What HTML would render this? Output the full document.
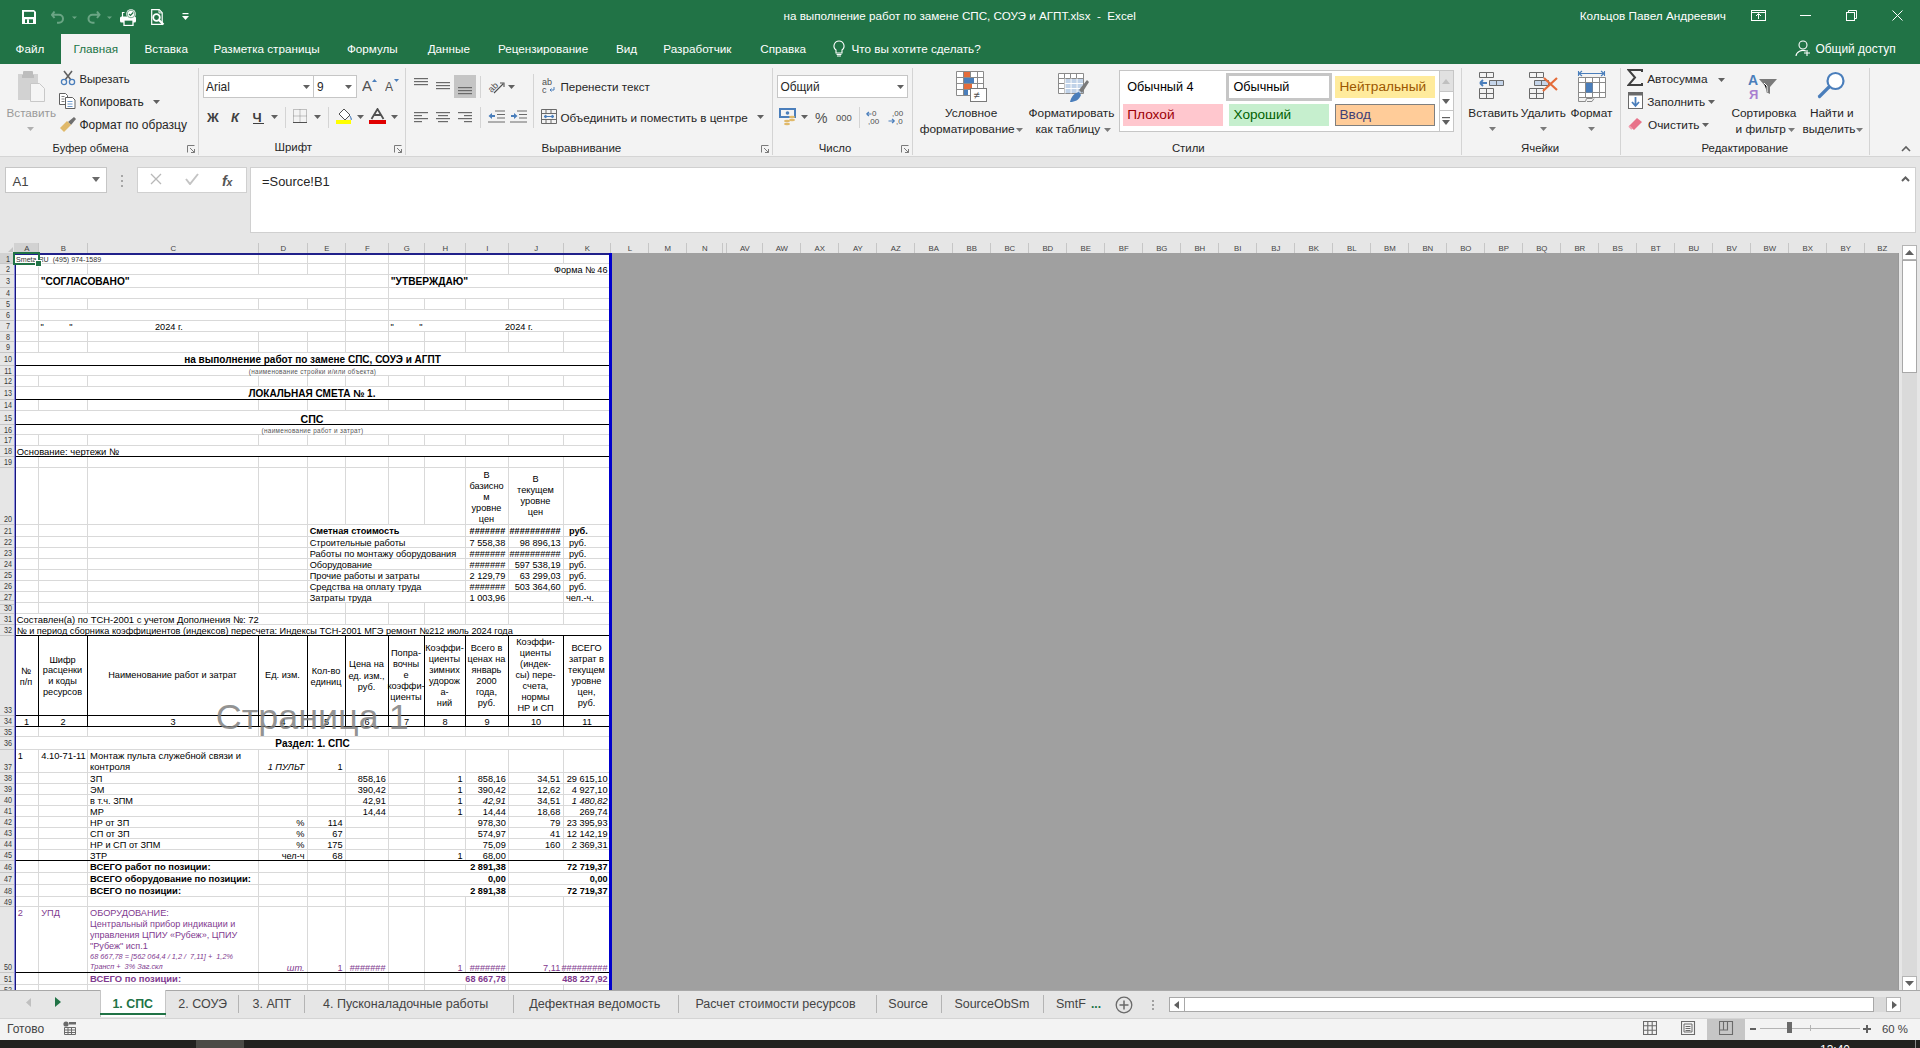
<!DOCTYPE html><html><head><meta charset="utf-8"><title>Excel</title><style>
*{margin:0;padding:0}
html,body{width:1920px;height:1048px;overflow:hidden;background:#e6e6e6}
body{position:relative;font-family:"Liberation Sans",sans-serif}
.t{position:absolute;line-height:0;white-space:pre}
.tc{transform:translateX(-50%)}
.r{position:absolute;display:block}
</style></head><body><div class="r" style="left:0px;top:0px;width:1920px;height:64px;background:#217346;"></div>
<div class="r" style="left:61px;top:34px;width:69px;height:30px;background:#f3f3f3;"></div>
<div class="r" style="left:0px;top:64px;width:1920px;height:92px;background:#f3f3f3;"></div>
<div class="r" style="left:0px;top:156px;width:1920px;height:1px;background:#d5d5d5;"></div>
<div class="r" style="left:0px;top:157px;width:1920px;height:86px;background:#e6e6e6;"></div>
<div class="t" style="left:783.50px;top:16.36px;font-size:11.65px;color:#ffffff;font-weight:normal;font-style:normal;">на выполнение работ по замене СПС, СОУЭ и АГПТ.xlsx  -  Excel</div>
<div class="t" style="left:1579.70px;top:16.21px;font-size:11.79px;color:#ffffff;font-weight:normal;font-style:normal;">Кольцов Павел Андреевич</div>
<svg class="r" style="left:1751px;top:10px;" width="15" height="11" viewBox="0 0 15 11"><rect x="0.5" y="0.5" width="14" height="10" fill="none" stroke="#fff"/><line x1="0" y1="2.5" x2="15" y2="2.5" stroke="#fff"/><path d="M7.5 9V4M5 6l2.5-2.5L10 6" fill="none" stroke="#fff"/></svg>
<div class="r" style="left:1800px;top:15px;width:11px;height:1px;background:#ffffff;"></div>
<svg class="r" style="left:1846px;top:10px;" width="11" height="11" viewBox="0 0 11 11"><rect x="0.5" y="2.5" width="8" height="8" fill="none" stroke="#fff"/><path d="M2.5 2.5V0.5h8v8h-2" fill="none" stroke="#fff"/></svg>
<svg class="r" style="left:1892px;top:10px;" width="11" height="11" viewBox="0 0 11 11"><path d="M0.5 0.5l10 10M10.5 0.5l-10 10" stroke="#fff"/></svg>
<svg class="r" style="left:22px;top:10px;" width="14" height="14" viewBox="0 0 14 14"><path d="M0 0h12l2 2v12H0z" fill="#fff"/><rect x="2" y="1.8" width="10" height="5.2" fill="#217346"/><rect x="3" y="9.3" width="8" height="3.7" fill="#217346"/><rect x="5" y="9.3" width="2" height="3.7" fill="#fff"/></svg>
<svg class="r" style="left:51px;top:10px;" width="30" height="14" viewBox="0 0 30 14"><path d="M3.5 1.5L1 4.8 3.5 8M1.5 4.8h6.5a4 4 0 0 1 0 8H6" fill="none" stroke="#6aa584" stroke-width="2"/><path d="M21 6.5h5l-2.5 2.5z" fill="#6aa584"/></svg>
<svg class="r" style="left:86px;top:10px;" width="30" height="14" viewBox="0 0 30 14"><path d="M11 1.5l2.5 3.3L11 8M13 4.8H6.5a4 4 0 0 0 0 8H8.5" fill="none" stroke="#6aa584" stroke-width="2"/><path d="M21 6.5h5l-2.5 2.5z" fill="#6aa584"/></svg>
<svg class="r" style="left:120px;top:9px;" width="17" height="17" viewBox="0 0 17 17"><path d="M2.5 8V3.5h2" fill="none" stroke="#fff" stroke-width="1.2"/><rect x="0" y="7.5" width="16" height="6" rx="1.5" fill="#fff"/><rect x="4" y="11" width="9" height="5.5" fill="#217346" stroke="#fff" stroke-width="1.3"/><circle cx="11" cy="5" r="4.8" fill="#fff"/><circle cx="11" cy="5" r="3.8" fill="none" stroke="#217346" stroke-width="0.6"/><path d="M9 5l1.5 1.5L13.2 3.5" fill="none" stroke="#217346" stroke-width="1.2"/></svg>
<svg class="r" style="left:151px;top:9px;" width="17" height="17" viewBox="0 0 17 17"><path d="M0.7 0.7h7.5l3 3V15.3H0.7z" fill="none" stroke="#fff" stroke-width="1.2"/><path d="M8 0.7v3.2h3" fill="none" stroke="#fff" stroke-width="1"/><circle cx="5.5" cy="8.5" r="3.3" fill="#217346" stroke="#fff" stroke-width="1.8"/><path d="M8 11l4.5 4.5" stroke="#fff" stroke-width="2.2"/></svg>
<svg class="r" style="left:182px;top:13px;" width="7" height="8" viewBox="0 0 7 8"><rect x="0.5" y="0" width="6" height="1.2" fill="#fff"/><path d="M0 3h7L3.5 7z" fill="#fff"/></svg>
<div class="t" style="left:15.50px;top:49.05px;font-size:11.7px;color:#ffffff;font-weight:normal;font-style:normal;">Файл</div>
<div class="t" style="left:144.50px;top:49.05px;font-size:11.7px;color:#ffffff;font-weight:normal;font-style:normal;">Вставка</div>
<div class="t" style="left:213.50px;top:49.05px;font-size:11.7px;color:#ffffff;font-weight:normal;font-style:normal;">Разметка страницы</div>
<div class="t" style="left:346.90px;top:49.05px;font-size:11.7px;color:#ffffff;font-weight:normal;font-style:normal;">Формулы</div>
<div class="t" style="left:427.70px;top:49.05px;font-size:11.7px;color:#ffffff;font-weight:normal;font-style:normal;">Данные</div>
<div class="t" style="left:497.90px;top:49.05px;font-size:11.7px;color:#ffffff;font-weight:normal;font-style:normal;">Рецензирование</div>
<div class="t" style="left:616.00px;top:49.05px;font-size:11.7px;color:#ffffff;font-weight:normal;font-style:normal;">Вид</div>
<div class="t" style="left:663.30px;top:49.05px;font-size:11.7px;color:#ffffff;font-weight:normal;font-style:normal;">Разработчик</div>
<div class="t" style="left:760.20px;top:49.05px;font-size:11.7px;color:#ffffff;font-weight:normal;font-style:normal;">Справка</div>
<div class="t" style="left:851.50px;top:49.05px;font-size:11.7px;color:#ffffff;font-weight:normal;font-style:normal;">Что вы хотите сделать?</div>
<div class="t" style="left:73.50px;top:49.05px;font-size:11.7px;color:#217346;font-weight:normal;font-style:normal;">Главная</div>
<svg class="r" style="left:832px;top:40px;" width="14" height="17" viewBox="0 0 14 17"><path d="M7 1a5 5 0 0 0-3 9v3h6v-3a5 5 0 0 0-3-9z" fill="none" stroke="#fff" stroke-width="1.1"/><path d="M4.5 14.5h5M5 16h4" stroke="#fff"/></svg>
<svg class="r" style="left:1795px;top:40px;" width="16" height="17" viewBox="0 0 16 17"><circle cx="8" cy="5" r="4" fill="none" stroke="#fff" stroke-width="1.1"/><path d="M1 16a7 6 0 0 1 10-5" fill="none" stroke="#fff" stroke-width="1.1"/><path d="M12 10v6M9 13h6" stroke="#fff" stroke-width="1.1"/></svg>
<div class="t" style="left:1815.50px;top:48.96px;font-size:11.95px;color:#ffffff;font-weight:normal;font-style:normal;">Общий доступ</div>
<svg class="r" style="left:17px;top:71px;" width="30" height="32" viewBox="0 0 30 32"><rect x="1" y="3" width="20" height="26" fill="#d2d2d2"/><rect x="6" y="0" width="10" height="6" rx="1" fill="#bdbdbd"/><rect x="5" y="4" width="12" height="3" fill="#bdbdbd"/><path d="M13.5 12.5h9l5 5v13h-14z" fill="#f5f5f5" stroke="#c8c8c8"/></svg>
<div class="t" style="left:6.50px;top:113.25px;font-size:11.7px;color:#9a9a9a;font-weight:normal;font-style:normal;">Вставить</div>
<svg class="r" style="left:27px;top:127px;" width="7" height="4" viewBox="0 0 7 4"><path d="M0 0h7L3.5 4z" fill="#b0b0b0"/></svg>
<svg class="r" style="left:60px;top:70px;" width="16" height="16" viewBox="0 0 16 16"><path d="M4 1l7 9M12 1l-7 9" stroke="#606060" stroke-width="1.6"/><circle cx="4" cy="12" r="2.6" fill="none" stroke="#4a7ebb" stroke-width="1.3"/><circle cx="12" cy="12" r="2.6" fill="none" stroke="#4a7ebb" stroke-width="1.3"/></svg>
<div class="t" style="left:79.40px;top:79.48px;font-size:11.3px;color:#262626;font-weight:normal;font-style:normal;">Вырезать</div>
<svg class="r" style="left:59px;top:93px;" width="17" height="16" viewBox="0 0 17 16"><path d="M0.5 0.5h6l2 2v9h-8z" fill="#fff" stroke="#606060"/><path d="M6.5 4.5h7l2.5 2.5v8.5h-9.5z" fill="#fff" stroke="#606060"/><path d="M8.5 8.5h5M8.5 11h5M8.5 13.5h5" stroke="#4a7ebb" stroke-width="0.8"/><path d="M2.5 3.5h3M2.5 6h3M2.5 8.5h3" stroke="#606060" stroke-width="0.8"/></svg>
<div class="t" style="left:79.40px;top:102.21px;font-size:11.94px;color:#262626;font-weight:normal;font-style:normal;">Копировать</div>
<svg class="r" style="left:153px;top:100px;" width="7" height="4" viewBox="0 0 7 4"><path d="M0 0h7L3.5 4z" fill="#606060"/></svg>
<svg class="r" style="left:59px;top:116px;" width="18" height="16" viewBox="0 0 18 16"><path d="M9 6l6-5 2 2-5 6z" fill="#6f6f6f"/><path d="M1 12l7-7 4 4-7 7z" fill="#e0b96a"/></svg>
<div class="t" style="left:79.40px;top:124.64px;font-size:12.0px;color:#262626;font-weight:normal;font-style:normal;">Формат по образцу</div>
<div class="t" style="left:52.60px;top:147.53px;font-size:11.18px;color:#262626;font-weight:normal;font-style:normal;">Буфер обмена</div>
<svg class="r" style="left:187px;top:145px;" width="8" height="8" viewBox="0 0 8 8"><path d="M0.5 7.5V0.5H7.5" fill="none" stroke="#7a7a7a"/><path d="M3 3l4.5 4.5M7.5 4v3.5H4" fill="none" stroke="#7a7a7a"/></svg>
<div class="r" style="left:198px;top:68px;width:1px;height:87px;background:#d4d4d4;"></div>
<div class="r" style="left:203px;top:75px;width:111px;height:23px;background:#ffffff;box-sizing:border-box;border:1px solid #c6c6c6;"></div>
<div class="r" style="left:313px;top:75px;width:44px;height:23px;background:#ffffff;box-sizing:border-box;border:1px solid #c6c6c6;"></div>
<div class="t" style="left:206.00px;top:87.28px;font-size:11.9px;color:#262626;font-weight:normal;font-style:normal;">Arial</div>
<div class="t" style="left:317.00px;top:87.28px;font-size:11.9px;color:#262626;font-weight:normal;font-style:normal;">9</div>
<svg class="r" style="left:303px;top:85px;" width="7" height="4" viewBox="0 0 7 4"><path d="M0 0h7L3.5 4z" fill="#606060"/></svg>
<svg class="r" style="left:345px;top:85px;" width="7" height="4" viewBox="0 0 7 4"><path d="M0 0h7L3.5 4z" fill="#606060"/></svg>
<svg class="r" style="left:362px;top:78px;" width="15" height="13" viewBox="0 0 15 13"><text x="0" y="13" font-family="Liberation Sans" font-size="15" fill="#505050">A</text><path d="M10 4h5l-2.5-3z" fill="#4a7ebb"/></svg>
<svg class="r" style="left:385px;top:78px;" width="14" height="13" viewBox="0 0 14 13"><text x="0" y="13" font-family="Liberation Sans" font-size="12" fill="#505050">A</text><path d="M9 1h5l-2.5 3z" fill="#4a7ebb"/></svg>
<div class="t" style="left:207.00px;top:117.90px;font-size:13px;color:#404040;font-weight:bold;font-style:normal;">Ж</div>
<div class="t" style="left:231.00px;top:117.90px;font-size:13px;color:#404040;font-weight:bold;font-style:italic;">К</div>
<div class="t" style="left:252.50px;top:117.90px;font-size:13px;color:#404040;font-weight:bold;font-style:normal;">Ч</div>
<div class="r" style="left:253px;top:123px;width:11px;height:1px;background:#404040;"></div>
<svg class="r" style="left:271px;top:115px;" width="7" height="4" viewBox="0 0 7 4"><path d="M0 0h7L3.5 4z" fill="#606060"/></svg>
<div class="r" style="left:285px;top:107px;width:1px;height:21px;background:#d4d4d4;"></div>
<svg class="r" style="left:293px;top:109px;" width="14" height="14" viewBox="0 0 14 14"><path d="M0.5 0.5h13v13h-13zM7 0.5v13M0.5 7h13" fill="none" stroke="#8a8a8a" stroke-dasharray="1 1"/><path d="M0 13.5h14" stroke="#505050"/></svg>
<svg class="r" style="left:314px;top:115px;" width="7" height="4" viewBox="0 0 7 4"><path d="M0 0h7L3.5 4z" fill="#606060"/></svg>
<div class="r" style="left:328px;top:107px;width:1px;height:21px;background:#d4d4d4;"></div>
<svg class="r" style="left:335px;top:108px;" width="18" height="17" viewBox="0 0 18 17"><path d="M4 6l5-5 6 6-5 5z" fill="#fff" stroke="#505050"/><path d="M15 8c1 2 2 3 1 4" fill="#4a7ebb" stroke="#4a7ebb"/><rect x="1" y="12" width="15" height="4" fill="#ffff00"/></svg>
<svg class="r" style="left:357px;top:115px;" width="7" height="4" viewBox="0 0 7 4"><path d="M0 0h7L3.5 4z" fill="#606060"/></svg>
<svg class="r" style="left:369px;top:108px;" width="17" height="17" viewBox="0 0 17 17"><path d="M2.5 11L8.5 1l6 10M5 7h7" fill="none" stroke="#505050" stroke-width="1.8"/><rect x="0" y="12" width="17" height="4" fill="#e00000"/></svg>
<svg class="r" style="left:391px;top:115px;" width="7" height="4" viewBox="0 0 7 4"><path d="M0 0h7L3.5 4z" fill="#606060"/></svg>
<div class="t" style="left:274.60px;top:147.45px;font-size:11.4px;color:#262626;font-weight:normal;font-style:normal;">Шрифт</div>
<svg class="r" style="left:394px;top:145px;" width="8" height="8" viewBox="0 0 8 8"><path d="M0.5 7.5V0.5H7.5" fill="none" stroke="#7a7a7a"/><path d="M3 3l4.5 4.5M7.5 4v3.5H4" fill="none" stroke="#7a7a7a"/></svg>
<div class="r" style="left:405px;top:68px;width:1px;height:87px;background:#d4d4d4;"></div>
<svg class="r" style="left:414px;top:78px;" width="14" height="9" viewBox="0 0 14 9"><rect x="0" y="0" width="14" height="1.2" fill="#6a6a6a"/><rect x="0" y="3" width="14" height="1.2" fill="#6a6a6a"/><rect x="0" y="6" width="14" height="1.2" fill="#6a6a6a"/></svg>
<svg class="r" style="left:436px;top:82px;" width="14" height="9" viewBox="0 0 14 9"><rect x="0" y="0" width="14" height="1.2" fill="#6a6a6a"/><rect x="0" y="3" width="14" height="1.2" fill="#6a6a6a"/><rect x="0" y="6" width="14" height="1.2" fill="#6a6a6a"/></svg>
<div class="r" style="left:454px;top:75px;width:22px;height:23px;background:#c5c5c5;"></div>
<svg class="r" style="left:458px;top:87px;" width="14" height="9" viewBox="0 0 14 9"><rect x="0" y="0" width="14" height="1.2" fill="#6a6a6a"/><rect x="0" y="3" width="14" height="1.2" fill="#6a6a6a"/><rect x="0" y="6" width="14" height="1.2" fill="#6a6a6a"/></svg>
<div class="r" style="left:480px;top:76px;width:1px;height:22px;background:#d4d4d4;"></div>
<svg class="r" style="left:487px;top:78px;" width="20" height="16" viewBox="0 0 20 16"><text x="0" y="12" font-family="Liberation Sans" font-size="9" fill="#505050" transform="rotate(-45 6 8)">ab</text><path d="M7 15l9-9M13 5h4v4" fill="none" stroke="#505050" stroke-width="1.1"/></svg>
<svg class="r" style="left:508px;top:85px;" width="7" height="4" viewBox="0 0 7 4"><path d="M0 0h7L3.5 4z" fill="#606060"/></svg>
<svg class="r" style="left:414px;top:112px;" width="14" height="12" viewBox="0 0 14 12"><rect x="0" y="0" width="14" height="1.2" fill="#6a6a6a"/><rect x="0" y="3" width="8" height="1.2" fill="#6a6a6a"/><rect x="0" y="6" width="14" height="1.2" fill="#6a6a6a"/><rect x="0" y="9" width="8" height="1.2" fill="#6a6a6a"/></svg>
<svg class="r" style="left:436px;top:112px;" width="14" height="12" viewBox="0 0 14 12"><rect x="0.0" y="0" width="14" height="1.2" fill="#6a6a6a"/><rect x="2.0" y="3" width="10" height="1.2" fill="#6a6a6a"/><rect x="0.0" y="6" width="14" height="1.2" fill="#6a6a6a"/><rect x="2.0" y="9" width="10" height="1.2" fill="#6a6a6a"/></svg>
<svg class="r" style="left:458px;top:112px;" width="14" height="12" viewBox="0 0 14 12"><rect x="0" y="0" width="14" height="1.2" fill="#6a6a6a"/><rect x="6" y="3" width="8" height="1.2" fill="#6a6a6a"/><rect x="0" y="6" width="14" height="1.2" fill="#6a6a6a"/><rect x="6" y="9" width="8" height="1.2" fill="#6a6a6a"/></svg>
<div class="r" style="left:480px;top:107px;width:1px;height:21px;background:#d4d4d4;"></div>
<svg class="r" style="left:488px;top:110px;" width="17" height="14" viewBox="0 0 17 14"><path d="M7 1h10M9 4.5h8M9 8h8M0 12h17" stroke="#6a6a6a" stroke-width="1.2"/><path d="M0.5 6l3.5-3v2h3v2h-3v2z" fill="#4a7ebb"/></svg>
<svg class="r" style="left:510px;top:110px;" width="17" height="14" viewBox="0 0 17 14"><path d="M7 1h10M9 4.5h8M9 8h8M0 12h17" stroke="#6a6a6a" stroke-width="1.2"/><path d="M7.5 6l-3.5-3v2h-3v2h3v2z" fill="#4a7ebb"/></svg>
<div class="r" style="left:533px;top:74px;width:1px;height:54px;background:#d4d4d4;"></div>
<svg class="r" style="left:542px;top:77px;" width="14" height="17" viewBox="0 0 14 17"><text x="0" y="8" font-family="Liberation Sans" font-size="9" fill="#505050">ab</text><text x="0" y="16" font-family="Liberation Sans" font-size="9" fill="#505050">c</text><path d="M12 10v3h-4M9.5 11.5l-1.5 1.5 1.5 1.5" fill="none" stroke="#4a7ebb"/></svg>
<div class="t" style="left:560.40px;top:87.38px;font-size:11.61px;color:#262626;font-weight:normal;font-style:normal;">Перенести текст</div>
<svg class="r" style="left:541px;top:109px;" width="16" height="15" viewBox="0 0 16 15"><path d="M0.5 0.5h15v14h-15zM0.5 4.5h15M0.5 10.5h15M5 0.5v4M10 0.5v4M5 10.5v4M10 10.5v4" fill="none" stroke="#6a6a6a"/><path d="M3 7.5h10M3 7.5l2-1.5v3zM13 7.5l-2-1.5v3z" fill="#4a7ebb" stroke="#4a7ebb"/></svg>
<div class="t" style="left:560.40px;top:118.34px;font-size:11.72px;color:#262626;font-weight:normal;font-style:normal;">Объединить и поместить в центре</div>
<svg class="r" style="left:757px;top:115px;" width="7" height="4" viewBox="0 0 7 4"><path d="M0 0h7L3.5 4z" fill="#606060"/></svg>
<div class="t" style="left:541.50px;top:147.58px;font-size:11.6px;color:#262626;font-weight:normal;font-style:normal;">Выравнивание</div>
<svg class="r" style="left:761px;top:145px;" width="8" height="8" viewBox="0 0 8 8"><path d="M0.5 7.5V0.5H7.5" fill="none" stroke="#7a7a7a"/><path d="M3 3l4.5 4.5M7.5 4v3.5H4" fill="none" stroke="#7a7a7a"/></svg>
<div class="r" style="left:772px;top:68px;width:1px;height:87px;background:#d4d4d4;"></div>
<div class="r" style="left:777px;top:75px;width:131px;height:23px;background:#ffffff;box-sizing:border-box;border:1px solid #c6c6c6;"></div>
<div class="t" style="left:780.50px;top:87.28px;font-size:11.9px;color:#262626;font-weight:normal;font-style:normal;">Общий</div>
<svg class="r" style="left:897px;top:85px;" width="7" height="4" viewBox="0 0 7 4"><path d="M0 0h7L3.5 4z" fill="#606060"/></svg>
<svg class="r" style="left:779px;top:108px;" width="18" height="18" viewBox="0 0 18 18"><rect x="1" y="1" width="15" height="8" fill="none" stroke="#4a7ebb" stroke-width="2"/><circle cx="8.5" cy="5" r="1.8" fill="#4a7ebb"/><ellipse cx="13" cy="9" rx="3" ry="1.3" fill="#e0b96a"/><ellipse cx="13" cy="12" rx="3" ry="1.3" fill="#e0b96a"/><ellipse cx="8" cy="13" rx="3" ry="1.3" fill="#e0b96a"/><ellipse cx="8" cy="16" rx="3" ry="1.3" fill="#e0b96a"/></svg>
<svg class="r" style="left:801px;top:115px;" width="7" height="4" viewBox="0 0 7 4"><path d="M0 0h7L3.5 4z" fill="#606060"/></svg>
<div class="t" style="left:815.00px;top:118.25px;font-size:14px;color:#505050;font-weight:normal;font-style:normal;">%</div>
<div class="t" style="left:836.00px;top:118.31px;font-size:9.5px;color:#505050;font-weight:normal;font-style:normal;">000</div>
<div class="r" style="left:859px;top:107px;width:1px;height:21px;background:#d4d4d4;"></div>
<svg class="r" style="left:866px;top:109px;" width="16" height="16" viewBox="0 0 16 16"><text x="6" y="7" font-family="Liberation Sans" font-size="8" fill="#505050">0</text><text x="2" y="15" font-family="Liberation Sans" font-size="8" fill="#505050">,00</text><path d="M0.5 5h5M0.5 5l2.5-2M0.5 5l2.5 2" fill="none" stroke="#4a7ebb" stroke-width="1.2"/></svg>
<svg class="r" style="left:888px;top:109px;" width="16" height="16" viewBox="0 0 16 16"><text x="4" y="7" font-family="Liberation Sans" font-size="8" fill="#505050">,00</text><text x="8" y="15" font-family="Liberation Sans" font-size="8" fill="#505050">,0</text><path d="M0.5 12h6M6.5 12l-2.5-2M6.5 12l-2.5 2" fill="none" stroke="#4a7ebb" stroke-width="1.2"/></svg>
<div class="t" style="left:818.70px;top:147.65px;font-size:11.4px;color:#262626;font-weight:normal;font-style:normal;">Число</div>
<svg class="r" style="left:901px;top:145px;" width="8" height="8" viewBox="0 0 8 8"><path d="M0.5 7.5V0.5H7.5" fill="none" stroke="#7a7a7a"/><path d="M3 3l4.5 4.5M7.5 4v3.5H4" fill="none" stroke="#7a7a7a"/></svg>
<div class="r" style="left:912px;top:68px;width:1px;height:87px;background:#d4d4d4;"></div>
<svg class="r" style="left:956px;top:71px;" width="32" height="31" viewBox="0 0 32 31"><path d="M0.5 0.5h27v24h-27zM0.5 6.5h27M0.5 12.5h27M0.5 18.5h27M7.5 0.5v24M14.5 0.5v24M21.5 0.5v24" fill="#fff" stroke="#8a8a8a"/><rect x="8" y="1" width="6" height="5" fill="#e46c3a"/><rect x="8" y="7" width="10" height="5" fill="#4a7ebb"/><rect x="8" y="13" width="8" height="5" fill="#e46c3a"/><rect x="8" y="19" width="4" height="5" fill="#4a7ebb"/><rect x="14.5" y="17.5" width="16" height="13" fill="#fff" stroke="#7a7a7a"/><text x="17.5" y="28" font-family="Liberation Sans" font-size="11" fill="#505050">≠</text></svg>
<div class="t" style="left:945.00px;top:112.90px;font-size:11.84px;color:#262626;font-weight:normal;font-style:normal;">Условное</div>
<div class="t" style="left:919.70px;top:128.50px;font-size:11.84px;color:#262626;font-weight:normal;font-style:normal;">форматирование</div>
<svg class="r" style="left:1016px;top:128px;" width="7" height="4" viewBox="0 0 7 4"><path d="M0 0h7L3.5 4z" fill="#7a7a7a"/></svg>
<svg class="r" style="left:1058px;top:73px;" width="32" height="30" viewBox="0 0 32 30"><path d="M0.5 0.5h25v20h-25zM0.5 5.5h25M0.5 10.5h25M0.5 15.5h25M6.5 0.5v20M12.5 0.5v20M18.5 0.5v20" fill="#fff" stroke="#8a8a8a"/><rect x="7" y="6" width="18" height="14" fill="#b9cde5" opacity="0.9"/><path d="M7 5.5v15M13 5.5v15M19 5.5v15M7 10.5h18M7 15.5h18" stroke="#fff"/><path d="M21 17l8-10 2 2-7 11z" fill="#7a7a7a"/><path d="M12 29c1-5 4-9 9-10l2 3c-2 5-6 7-11 7z" fill="#4a7ebb"/></svg>
<div class="t" style="left:1028.60px;top:112.90px;font-size:11.84px;color:#262626;font-weight:normal;font-style:normal;">Форматировать</div>
<div class="t" style="left:1035.40px;top:128.50px;font-size:11.84px;color:#262626;font-weight:normal;font-style:normal;">как таблицу</div>
<svg class="r" style="left:1104px;top:128px;" width="7" height="4" viewBox="0 0 7 4"><path d="M0 0h7L3.5 4z" fill="#7a7a7a"/></svg>
<div class="r" style="left:1119px;top:70px;width:335px;height:62px;background:#ffffff;box-sizing:border-box;border:1px solid #c6c6c6;"></div>
<div class="t" style="left:1127.20px;top:87.22px;font-size:12.64px;color:#000000;font-weight:normal;font-style:normal;">Обычный 4</div>
<div class="r" style="left:1226px;top:73px;width:106px;height:28px;background:#ffffff;box-sizing:border-box;border:3px solid #c6c6c6;"></div>
<div class="t" style="left:1233.50px;top:87.22px;font-size:12.64px;color:#000000;font-weight:normal;font-style:normal;">Обычный</div>
<div class="r" style="left:1335px;top:76px;width:100px;height:22px;background:#ffeb9c;"></div>
<div class="t" style="left:1339.50px;top:86.87px;font-size:13.66px;color:#9c5700;font-weight:normal;font-style:normal;">Нейтральный</div>
<div class="r" style="left:1123px;top:104px;width:100px;height:22px;background:#ffc7ce;"></div>
<div class="t" style="left:1127.20px;top:114.65px;font-size:13.7px;color:#9c0006;font-weight:normal;font-style:normal;">Плохой</div>
<div class="r" style="left:1229px;top:104px;width:100px;height:22px;background:#c6efce;"></div>
<div class="t" style="left:1233.50px;top:114.69px;font-size:13.6px;color:#006100;font-weight:normal;font-style:normal;">Хороший</div>
<div class="r" style="left:1335px;top:104px;width:100px;height:22px;background:#ffcc99;box-sizing:border-box;border:1px solid #7f7f7f;"></div>
<div class="t" style="left:1339.50px;top:114.69px;font-size:13.6px;color:#3f3f76;font-weight:normal;font-style:normal;">Ввод</div>
<div class="r" style="left:1439px;top:70px;width:15px;height:62px;background:#ffffff;box-sizing:border-box;border:1px solid #c6c6c6;"></div>
<div class="r" style="left:1440px;top:71px;width:13px;height:20px;background:#e1e1e1;"></div>
<div class="r" style="left:1439px;top:91px;width:15px;height:1px;background:#c6c6c6;"></div>
<div class="r" style="left:1439px;top:110px;width:15px;height:1px;background:#c6c6c6;"></div>
<svg class="r" style="left:1442px;top:79px;" width="9" height="5" viewBox="0 0 9 5"><path d="M0 5h8L4 0z" fill="#c0c0c0"/></svg>
<svg class="r" style="left:1442px;top:99px;" width="9" height="5" viewBox="0 0 9 5"><path d="M0 0h8L4 5z" fill="#606060"/></svg>
<svg class="r" style="left:1442px;top:117px;" width="9" height="8" viewBox="0 0 9 8"><rect x="0" y="0" width="8" height="1.2" fill="#606060"/><path d="M0 3h8L4 8z" fill="#606060"/></svg>
<div class="t" style="left:1171.90px;top:147.65px;font-size:11.4px;color:#262626;font-weight:normal;font-style:normal;">Стили</div>
<div class="r" style="left:1461px;top:68px;width:1px;height:87px;background:#d4d4d4;"></div>
<svg class="r" style="left:1478px;top:71px;" width="28" height="29" viewBox="0 0 28 29"><path d="M1.5 1.5h14v5h-14zM8.5 1.5v5" fill="none" stroke="#6a6a6a"/><path d="M11.5 9.5h14v5h-14zM18.5 9.5v5" fill="#c5d5ea" stroke="#6a6a6a"/><path d="M1.5 17.5h14v10h-14zM1.5 22.5h14M8.5 17.5v10" fill="none" stroke="#6a6a6a"/><path d="M2 12h7M2 12l3-3M2 12l3 3" fill="none" stroke="#4a7ebb" stroke-width="1.8"/></svg>
<div class="t" style="left:1468.30px;top:112.90px;font-size:11.84px;color:#262626;font-weight:normal;font-style:normal;">Вставить</div>
<svg class="r" style="left:1489px;top:127px;" width="7" height="4" viewBox="0 0 7 4"><path d="M0 0h7L3.5 4z" fill="#7a7a7a"/></svg>
<svg class="r" style="left:1528px;top:71px;" width="32" height="29" viewBox="0 0 32 29"><path d="M1.5 1.5h14v5h-14zM8.5 1.5v5" fill="none" stroke="#6a6a6a"/><path d="M6.5 9.5h14v5h-14zM13.5 9.5v5" fill="#c5d5ea" stroke="#6a6a6a"/><path d="M1.5 17.5h14v10h-14zM1.5 22.5h14M8.5 17.5v10" fill="none" stroke="#6a6a6a"/><path d="M15 20l14-13M16 7l13 12" stroke="#e46c3a" stroke-width="2.2"/></svg>
<div class="t" style="left:1520.80px;top:112.90px;font-size:11.84px;color:#262626;font-weight:normal;font-style:normal;">Удалить</div>
<svg class="r" style="left:1540px;top:127px;" width="7" height="4" viewBox="0 0 7 4"><path d="M0 0h7L3.5 4z" fill="#7a7a7a"/></svg>
<svg class="r" style="left:1577px;top:70px;" width="30" height="32" viewBox="0 0 30 32"><path d="M1.5 1v5M27.5 1v5M2 3.5h25M2 3.5l3-2.5M2 3.5l3 2.5M27 3.5l-3-2.5M27 3.5l-3 2.5" fill="none" stroke="#4a7ebb" stroke-width="1.1"/><path d="M1.5 7.5h27v20h-27zM1.5 12.5h27M1.5 22.5h27M8.5 7.5v20M15.5 7.5v20M22.5 7.5v20" fill="#fff" stroke="#8a8a8a"/><rect x="9" y="13" width="6.5" height="9.5" fill="#4a7ebb"/><path d="M1.5 27.5v4h7l1-3h6" fill="none" stroke="#8a8a8a"/><path d="M10 31.5h5l2-3" fill="none" stroke="#8a8a8a"/></svg>
<div class="t" style="left:1570.40px;top:112.90px;font-size:11.84px;color:#262626;font-weight:normal;font-style:normal;">Формат</div>
<svg class="r" style="left:1588px;top:127px;" width="7" height="4" viewBox="0 0 7 4"><path d="M0 0h7L3.5 4z" fill="#7a7a7a"/></svg>
<div class="t" style="left:1521.00px;top:147.65px;font-size:11.4px;color:#262626;font-weight:normal;font-style:normal;">Ячейки</div>
<div class="r" style="left:1620px;top:68px;width:1px;height:87px;background:#d4d4d4;"></div>
<svg class="r" style="left:1627px;top:69px;" width="17" height="17" viewBox="0 0 17 17"><path d="M15 3V1H1.5l6.5 7.5L1.5 16H15v-2" fill="none" stroke="#404040" stroke-width="2"/></svg>
<div class="t" style="left:1647.20px;top:79.30px;font-size:11.84px;color:#262626;font-weight:normal;font-style:normal;">Автосумма</div>
<svg class="r" style="left:1718px;top:78px;" width="7" height="4" viewBox="0 0 7 4"><path d="M0 0h7L3.5 4z" fill="#606060"/></svg>
<svg class="r" style="left:1628px;top:92px;" width="16" height="18" viewBox="0 0 16 18"><rect x="0.5" y="0.5" width="14" height="16" fill="#fff" stroke="#6a6a6a"/><rect x="0.5" y="0.5" width="14" height="3" fill="#6a6a6a"/><path d="M7.5 5v9M4 10l3.5 4 3.5-4" fill="none" stroke="#4a7ebb" stroke-width="1.8"/></svg>
<div class="t" style="left:1647.20px;top:102.30px;font-size:11.84px;color:#262626;font-weight:normal;font-style:normal;">Заполнить</div>
<svg class="r" style="left:1708px;top:100px;" width="7" height="4" viewBox="0 0 7 4"><path d="M0 0h7L3.5 4z" fill="#606060"/></svg>
<svg class="r" style="left:1628px;top:116px;" width="15" height="15" viewBox="0 0 15 15"><path d="M1 10l8-8 5 4-8 8z" fill="#e8738a"/><path d="M1 10l3 3" stroke="#f3a0b0" stroke-width="2"/></svg>
<div class="t" style="left:1648.00px;top:125.30px;font-size:11.84px;color:#262626;font-weight:normal;font-style:normal;">Очистить</div>
<svg class="r" style="left:1702px;top:123px;" width="7" height="4" viewBox="0 0 7 4"><path d="M0 0h7L3.5 4z" fill="#606060"/></svg>
<svg class="r" style="left:1748px;top:72px;" width="31" height="28" viewBox="0 0 31 28"><text x="0" y="13" font-family="Liberation Sans" font-weight="bold" font-size="14" fill="#4a7ebb">A</text><text x="1" y="27" font-family="Liberation Sans" font-weight="bold" font-size="13" fill="#a87fd0">Я</text><path d="M11 7h18l-7 8v7l-4-2v-5z" fill="#7a7a7a"/><path d="M16 11l3 3v6" stroke="#fff" stroke-width="1"/></svg>
<div class="t" style="left:1731.50px;top:112.90px;font-size:11.84px;color:#262626;font-weight:normal;font-style:normal;">Сортировка</div>
<div class="t" style="left:1735.50px;top:128.50px;font-size:11.84px;color:#262626;font-weight:normal;font-style:normal;">и фильтр</div>
<svg class="r" style="left:1788px;top:128px;" width="7" height="4" viewBox="0 0 7 4"><path d="M0 0h7L3.5 4z" fill="#7a7a7a"/></svg>
<svg class="r" style="left:1817px;top:71px;" width="30" height="29" viewBox="0 0 30 29"><circle cx="18.5" cy="10" r="8" fill="#fff" stroke="#4a7ebb" stroke-width="2.2"/><path d="M12 16L2.5 25.5" stroke="#4a7ebb" stroke-width="3.2" stroke-linecap="round"/></svg>
<div class="t" style="left:1810.00px;top:112.90px;font-size:11.84px;color:#262626;font-weight:normal;font-style:normal;">Найти и</div>
<div class="t" style="left:1802.50px;top:128.50px;font-size:11.84px;color:#262626;font-weight:normal;font-style:normal;">выделить</div>
<svg class="r" style="left:1856px;top:128px;" width="7" height="4" viewBox="0 0 7 4"><path d="M0 0h7L3.5 4z" fill="#7a7a7a"/></svg>
<div class="t" style="left:1701.50px;top:147.66px;font-size:11.38px;color:#262626;font-weight:normal;font-style:normal;">Редактирование</div>
<div class="r" style="left:1869px;top:68px;width:1px;height:87px;background:#d4d4d4;"></div>
<svg class="r" style="left:1901px;top:145px;" width="10" height="7" viewBox="0 0 10 7"><path d="M1 6l4-4 4 4" fill="none" stroke="#606060" stroke-width="1.6"/></svg>
<div class="r" style="left:5px;top:167px;width:102px;height:26px;background:#ffffff;box-sizing:border-box;border:1px solid #c6c6c6;"></div>
<div class="t" style="left:12.50px;top:181.83px;font-size:13.2px;color:#444444;font-weight:normal;font-style:normal;">A1</div>
<svg class="r" style="left:92px;top:177px;" width="8" height="5" viewBox="0 0 8 5"><path d="M0 0h8L4 5z" fill="#6a6a6a"/></svg>
<div class="r" style="left:121px;top:175px;width:2px;height:2px;background:#a6a6a6;"></div>
<div class="r" style="left:121px;top:180px;width:2px;height:2px;background:#a6a6a6;"></div>
<div class="r" style="left:121px;top:185px;width:2px;height:2px;background:#a6a6a6;"></div>
<div class="r" style="left:137px;top:167px;width:110px;height:26px;background:#ffffff;box-sizing:border-box;border:1px solid #d0d0d0;"></div>
<svg class="r" style="left:150px;top:173px;" width="12" height="12" viewBox="0 0 12 12"><path d="M1 1l10 10M11 1L1 11" stroke="#b8b8b8" stroke-width="1.3"/></svg>
<svg class="r" style="left:185px;top:173px;" width="14" height="12" viewBox="0 0 14 12"><path d="M1 6l4 5 8-10" fill="none" stroke="#c4c4c4" stroke-width="2"/></svg>
<div class="t" style="left:222.00px;top:181.08px;font-size:14.5px;color:#555555;font-weight:bold;font-style:italic;font-family:"Liberation Serif",sans-serif;">f</div>
<div class="t" style="left:226.50px;top:182.46px;font-size:10.5px;color:#555555;font-weight:bold;font-style:italic;font-family:"Liberation Serif",sans-serif;">x</div>
<div class="r" style="left:250px;top:167px;width:1666px;height:66px;background:#ffffff;box-sizing:border-box;border:1px solid #d0d0d0;"></div>
<div class="t" style="left:262.00px;top:181.93px;font-size:12.9px;color:#262626;font-weight:normal;font-style:normal;">=Source!B1</div>
<svg class="r" style="left:1901px;top:176px;" width="9" height="6" viewBox="0 0 9 6"><path d="M1 5l3.5-3.5L8 5" fill="none" stroke="#606060" stroke-width="2"/></svg>
<div class="r" style="left:0px;top:243px;width:1899px;height:10px;background:#e6e6e6;"></div>
<div class="r" style="left:0px;top:253px;width:14px;height:737px;background:#e6e6e6;"></div>
<div class="r" style="left:612px;top:253px;width:1287px;height:737px;background:#a0a0a0;"></div>
<div class="r" style="left:14px;top:253px;width:598px;height:737px;background:#ffffff;"></div>
<div class="r" style="left:14px;top:243px;width:24px;height:10px;background:#d2d2d2;"></div>
<div class="r" style="left:38px;top:243px;width:1px;height:10px;background:#c6c6c6;"></div>
<div class="t tc" style="left:26.80px;top:248.70px;font-size:7.8px;color:#444444;font-weight:normal;font-style:normal;">A</div>
<div class="r" style="left:87px;top:243px;width:1px;height:10px;background:#c6c6c6;"></div>
<div class="t tc" style="left:63.30px;top:248.70px;font-size:7.8px;color:#444444;font-weight:normal;font-style:normal;">B</div>
<div class="r" style="left:258px;top:243px;width:1px;height:10px;background:#c6c6c6;"></div>
<div class="t tc" style="left:173.30px;top:248.70px;font-size:7.8px;color:#444444;font-weight:normal;font-style:normal;">C</div>
<div class="r" style="left:307px;top:243px;width:1px;height:10px;background:#c6c6c6;"></div>
<div class="t tc" style="left:283.30px;top:248.70px;font-size:7.8px;color:#444444;font-weight:normal;font-style:normal;">D</div>
<div class="r" style="left:345px;top:243px;width:1px;height:10px;background:#c6c6c6;"></div>
<div class="t tc" style="left:326.80px;top:248.70px;font-size:7.8px;color:#444444;font-weight:normal;font-style:normal;">E</div>
<div class="r" style="left:388px;top:243px;width:1px;height:10px;background:#c6c6c6;"></div>
<div class="t tc" style="left:367.30px;top:248.70px;font-size:7.8px;color:#444444;font-weight:normal;font-style:normal;">F</div>
<div class="r" style="left:424px;top:243px;width:1px;height:10px;background:#c6c6c6;"></div>
<div class="t tc" style="left:406.80px;top:248.70px;font-size:7.8px;color:#444444;font-weight:normal;font-style:normal;">G</div>
<div class="r" style="left:465px;top:243px;width:1px;height:10px;background:#c6c6c6;"></div>
<div class="t tc" style="left:445.30px;top:248.70px;font-size:7.8px;color:#444444;font-weight:normal;font-style:normal;">H</div>
<div class="r" style="left:508px;top:243px;width:1px;height:10px;background:#c6c6c6;"></div>
<div class="t tc" style="left:487.30px;top:248.70px;font-size:7.8px;color:#444444;font-weight:normal;font-style:normal;">I</div>
<div class="r" style="left:563px;top:243px;width:1px;height:10px;background:#c6c6c6;"></div>
<div class="t tc" style="left:536.30px;top:248.70px;font-size:7.8px;color:#444444;font-weight:normal;font-style:normal;">J</div>
<div class="r" style="left:610px;top:243px;width:1px;height:10px;background:#c6c6c6;"></div>
<div class="t tc" style="left:587.30px;top:248.70px;font-size:7.8px;color:#444444;font-weight:normal;font-style:normal;">K</div>
<div class="r" style="left:648px;top:243px;width:1px;height:10px;background:#c6c6c6;"></div>
<div class="t tc" style="left:629.80px;top:248.70px;font-size:7.8px;color:#444444;font-weight:normal;font-style:normal;">L</div>
<div class="r" style="left:686px;top:243px;width:1px;height:10px;background:#c6c6c6;"></div>
<div class="t tc" style="left:667.80px;top:248.70px;font-size:7.8px;color:#444444;font-weight:normal;font-style:normal;">M</div>
<div class="r" style="left:722px;top:243px;width:1px;height:10px;background:#c6c6c6;"></div>
<div class="t tc" style="left:704.80px;top:248.70px;font-size:7.8px;color:#444444;font-weight:normal;font-style:normal;">N</div>
<div class="r" style="left:762px;top:243px;width:1px;height:10px;background:#c6c6c6;"></div>
<div class="t tc" style="left:744.80px;top:248.70px;font-size:7.8px;color:#444444;font-weight:normal;font-style:normal;">AV</div>
<div class="r" style="left:800px;top:243px;width:1px;height:10px;background:#c6c6c6;"></div>
<div class="t tc" style="left:781.80px;top:248.70px;font-size:7.8px;color:#444444;font-weight:normal;font-style:normal;">AW</div>
<div class="r" style="left:838px;top:243px;width:1px;height:10px;background:#c6c6c6;"></div>
<div class="t tc" style="left:819.80px;top:248.70px;font-size:7.8px;color:#444444;font-weight:normal;font-style:normal;">AX</div>
<div class="r" style="left:876px;top:243px;width:1px;height:10px;background:#c6c6c6;"></div>
<div class="t tc" style="left:857.80px;top:248.70px;font-size:7.8px;color:#444444;font-weight:normal;font-style:normal;">AY</div>
<div class="r" style="left:914px;top:243px;width:1px;height:10px;background:#c6c6c6;"></div>
<div class="t tc" style="left:895.80px;top:248.70px;font-size:7.8px;color:#444444;font-weight:normal;font-style:normal;">AZ</div>
<div class="r" style="left:952px;top:243px;width:1px;height:10px;background:#c6c6c6;"></div>
<div class="t tc" style="left:933.80px;top:248.70px;font-size:7.8px;color:#444444;font-weight:normal;font-style:normal;">BA</div>
<div class="r" style="left:990px;top:243px;width:1px;height:10px;background:#c6c6c6;"></div>
<div class="t tc" style="left:971.80px;top:248.70px;font-size:7.8px;color:#444444;font-weight:normal;font-style:normal;">BB</div>
<div class="r" style="left:1028px;top:243px;width:1px;height:10px;background:#c6c6c6;"></div>
<div class="t tc" style="left:1009.80px;top:248.70px;font-size:7.8px;color:#444444;font-weight:normal;font-style:normal;">BC</div>
<div class="r" style="left:1066px;top:243px;width:1px;height:10px;background:#c6c6c6;"></div>
<div class="t tc" style="left:1047.80px;top:248.70px;font-size:7.8px;color:#444444;font-weight:normal;font-style:normal;">BD</div>
<div class="r" style="left:1104px;top:243px;width:1px;height:10px;background:#c6c6c6;"></div>
<div class="t tc" style="left:1085.80px;top:248.70px;font-size:7.8px;color:#444444;font-weight:normal;font-style:normal;">BE</div>
<div class="r" style="left:1142px;top:243px;width:1px;height:10px;background:#c6c6c6;"></div>
<div class="t tc" style="left:1123.80px;top:248.70px;font-size:7.8px;color:#444444;font-weight:normal;font-style:normal;">BF</div>
<div class="r" style="left:1180px;top:243px;width:1px;height:10px;background:#c6c6c6;"></div>
<div class="t tc" style="left:1161.80px;top:248.70px;font-size:7.8px;color:#444444;font-weight:normal;font-style:normal;">BG</div>
<div class="r" style="left:1218px;top:243px;width:1px;height:10px;background:#c6c6c6;"></div>
<div class="t tc" style="left:1199.80px;top:248.70px;font-size:7.8px;color:#444444;font-weight:normal;font-style:normal;">BH</div>
<div class="r" style="left:1256px;top:243px;width:1px;height:10px;background:#c6c6c6;"></div>
<div class="t tc" style="left:1237.80px;top:248.70px;font-size:7.8px;color:#444444;font-weight:normal;font-style:normal;">BI</div>
<div class="r" style="left:1294px;top:243px;width:1px;height:10px;background:#c6c6c6;"></div>
<div class="t tc" style="left:1275.80px;top:248.70px;font-size:7.8px;color:#444444;font-weight:normal;font-style:normal;">BJ</div>
<div class="r" style="left:1332px;top:243px;width:1px;height:10px;background:#c6c6c6;"></div>
<div class="t tc" style="left:1313.80px;top:248.70px;font-size:7.8px;color:#444444;font-weight:normal;font-style:normal;">BK</div>
<div class="r" style="left:1370px;top:243px;width:1px;height:10px;background:#c6c6c6;"></div>
<div class="t tc" style="left:1351.80px;top:248.70px;font-size:7.8px;color:#444444;font-weight:normal;font-style:normal;">BL</div>
<div class="r" style="left:1408px;top:243px;width:1px;height:10px;background:#c6c6c6;"></div>
<div class="t tc" style="left:1389.80px;top:248.70px;font-size:7.8px;color:#444444;font-weight:normal;font-style:normal;">BM</div>
<div class="r" style="left:1446px;top:243px;width:1px;height:10px;background:#c6c6c6;"></div>
<div class="t tc" style="left:1427.80px;top:248.70px;font-size:7.8px;color:#444444;font-weight:normal;font-style:normal;">BN</div>
<div class="r" style="left:1484px;top:243px;width:1px;height:10px;background:#c6c6c6;"></div>
<div class="t tc" style="left:1465.80px;top:248.70px;font-size:7.8px;color:#444444;font-weight:normal;font-style:normal;">BO</div>
<div class="r" style="left:1522px;top:243px;width:1px;height:10px;background:#c6c6c6;"></div>
<div class="t tc" style="left:1503.80px;top:248.70px;font-size:7.8px;color:#444444;font-weight:normal;font-style:normal;">BP</div>
<div class="r" style="left:1560px;top:243px;width:1px;height:10px;background:#c6c6c6;"></div>
<div class="t tc" style="left:1541.80px;top:248.70px;font-size:7.8px;color:#444444;font-weight:normal;font-style:normal;">BQ</div>
<div class="r" style="left:1598px;top:243px;width:1px;height:10px;background:#c6c6c6;"></div>
<div class="t tc" style="left:1579.80px;top:248.70px;font-size:7.8px;color:#444444;font-weight:normal;font-style:normal;">BR</div>
<div class="r" style="left:1636px;top:243px;width:1px;height:10px;background:#c6c6c6;"></div>
<div class="t tc" style="left:1617.80px;top:248.70px;font-size:7.8px;color:#444444;font-weight:normal;font-style:normal;">BS</div>
<div class="r" style="left:1674px;top:243px;width:1px;height:10px;background:#c6c6c6;"></div>
<div class="t tc" style="left:1655.80px;top:248.70px;font-size:7.8px;color:#444444;font-weight:normal;font-style:normal;">BT</div>
<div class="r" style="left:1712px;top:243px;width:1px;height:10px;background:#c6c6c6;"></div>
<div class="t tc" style="left:1693.80px;top:248.70px;font-size:7.8px;color:#444444;font-weight:normal;font-style:normal;">BU</div>
<div class="r" style="left:1750px;top:243px;width:1px;height:10px;background:#c6c6c6;"></div>
<div class="t tc" style="left:1731.80px;top:248.70px;font-size:7.8px;color:#444444;font-weight:normal;font-style:normal;">BV</div>
<div class="r" style="left:1788px;top:243px;width:1px;height:10px;background:#c6c6c6;"></div>
<div class="t tc" style="left:1769.80px;top:248.70px;font-size:7.8px;color:#444444;font-weight:normal;font-style:normal;">BW</div>
<div class="r" style="left:1826px;top:243px;width:1px;height:10px;background:#c6c6c6;"></div>
<div class="t tc" style="left:1807.80px;top:248.70px;font-size:7.8px;color:#444444;font-weight:normal;font-style:normal;">BX</div>
<div class="r" style="left:1864px;top:243px;width:1px;height:10px;background:#c6c6c6;"></div>
<div class="t tc" style="left:1845.80px;top:248.70px;font-size:7.8px;color:#444444;font-weight:normal;font-style:normal;">BY</div>
<div class="r" style="left:1899px;top:243px;width:1px;height:10px;background:#c6c6c6;"></div>
<div class="t tc" style="left:1882.30px;top:248.70px;font-size:7.8px;color:#444444;font-weight:normal;font-style:normal;">BZ</div>
<div class="r" style="left:726px;top:243px;width:1px;height:10px;background:#c6c6c6;"></div>
<svg class="r" style="left:8px;top:247px;" width="5" height="5" viewBox="0 0 5 5"><path d="M5 0v5H0z" fill="#c4c4c4"/></svg>
<div class="r" style="left:0px;top:253px;width:14px;height:10px;background:#d2d2d2;"></div>
<div class="t tc" style="left:7.50px;top:258.88px;font-size:9.0px;color:#3a3a3a;font-weight:normal;font-style:normal;transform:translateX(-50%) scaleX(0.8);">1</div>
<div class="r" style="left:0px;top:263px;width:14px;height:1px;background:#c6c6c6;"></div>
<div class="t tc" style="left:7.50px;top:269.38px;font-size:9.0px;color:#3a3a3a;font-weight:normal;font-style:normal;transform:translateX(-50%) scaleX(0.8);">2</div>
<div class="r" style="left:0px;top:274px;width:14px;height:1px;background:#c6c6c6;"></div>
<div class="t tc" style="left:7.50px;top:281.38px;font-size:9.0px;color:#3a3a3a;font-weight:normal;font-style:normal;transform:translateX(-50%) scaleX(0.8);">3</div>
<div class="r" style="left:0px;top:287px;width:14px;height:1px;background:#c6c6c6;"></div>
<div class="t tc" style="left:7.50px;top:293.38px;font-size:9.0px;color:#3a3a3a;font-weight:normal;font-style:normal;transform:translateX(-50%) scaleX(0.8);">4</div>
<div class="r" style="left:0px;top:298px;width:14px;height:1px;background:#c6c6c6;"></div>
<div class="t tc" style="left:7.50px;top:304.38px;font-size:9.0px;color:#3a3a3a;font-weight:normal;font-style:normal;transform:translateX(-50%) scaleX(0.8);">5</div>
<div class="r" style="left:0px;top:309px;width:14px;height:1px;background:#c6c6c6;"></div>
<div class="t tc" style="left:7.50px;top:315.38px;font-size:9.0px;color:#3a3a3a;font-weight:normal;font-style:normal;transform:translateX(-50%) scaleX(0.8);">6</div>
<div class="r" style="left:0px;top:320px;width:14px;height:1px;background:#c6c6c6;"></div>
<div class="t tc" style="left:7.50px;top:326.38px;font-size:9.0px;color:#3a3a3a;font-weight:normal;font-style:normal;transform:translateX(-50%) scaleX(0.8);">7</div>
<div class="r" style="left:0px;top:331px;width:14px;height:1px;background:#c6c6c6;"></div>
<div class="t tc" style="left:7.50px;top:336.88px;font-size:9.0px;color:#3a3a3a;font-weight:normal;font-style:normal;transform:translateX(-50%) scaleX(0.8);">8</div>
<div class="r" style="left:0px;top:341px;width:14px;height:1px;background:#c6c6c6;"></div>
<div class="t tc" style="left:7.50px;top:347.38px;font-size:9.0px;color:#3a3a3a;font-weight:normal;font-style:normal;transform:translateX(-50%) scaleX(0.8);">9</div>
<div class="r" style="left:0px;top:352px;width:14px;height:1px;background:#c6c6c6;"></div>
<div class="t tc" style="left:7.50px;top:359.38px;font-size:9.0px;color:#3a3a3a;font-weight:normal;font-style:normal;transform:translateX(-50%) scaleX(0.8);">10</div>
<div class="r" style="left:0px;top:365px;width:14px;height:1px;background:#c6c6c6;"></div>
<div class="t tc" style="left:7.50px;top:370.88px;font-size:9.0px;color:#3a3a3a;font-weight:normal;font-style:normal;transform:translateX(-50%) scaleX(0.8);">11</div>
<div class="r" style="left:0px;top:375px;width:14px;height:1px;background:#c6c6c6;"></div>
<div class="t tc" style="left:7.50px;top:381.38px;font-size:9.0px;color:#3a3a3a;font-weight:normal;font-style:normal;transform:translateX(-50%) scaleX(0.8);">12</div>
<div class="r" style="left:0px;top:386px;width:14px;height:1px;background:#c6c6c6;"></div>
<div class="t tc" style="left:7.50px;top:393.38px;font-size:9.0px;color:#3a3a3a;font-weight:normal;font-style:normal;transform:translateX(-50%) scaleX(0.8);">13</div>
<div class="r" style="left:0px;top:399px;width:14px;height:1px;background:#c6c6c6;"></div>
<div class="t tc" style="left:7.50px;top:405.38px;font-size:9.0px;color:#3a3a3a;font-weight:normal;font-style:normal;transform:translateX(-50%) scaleX(0.8);">14</div>
<div class="r" style="left:0px;top:410px;width:14px;height:1px;background:#c6c6c6;"></div>
<div class="t tc" style="left:7.50px;top:417.88px;font-size:9.0px;color:#3a3a3a;font-weight:normal;font-style:normal;transform:translateX(-50%) scaleX(0.8);">15</div>
<div class="r" style="left:0px;top:424px;width:14px;height:1px;background:#c6c6c6;"></div>
<div class="t tc" style="left:7.50px;top:429.88px;font-size:9.0px;color:#3a3a3a;font-weight:normal;font-style:normal;transform:translateX(-50%) scaleX(0.8);">16</div>
<div class="r" style="left:0px;top:434px;width:14px;height:1px;background:#c6c6c6;"></div>
<div class="t tc" style="left:7.50px;top:440.38px;font-size:9.0px;color:#3a3a3a;font-weight:normal;font-style:normal;transform:translateX(-50%) scaleX(0.8);">17</div>
<div class="r" style="left:0px;top:445px;width:14px;height:1px;background:#c6c6c6;"></div>
<div class="t tc" style="left:7.50px;top:451.38px;font-size:9.0px;color:#3a3a3a;font-weight:normal;font-style:normal;transform:translateX(-50%) scaleX(0.8);">18</div>
<div class="r" style="left:0px;top:456px;width:14px;height:1px;background:#c6c6c6;"></div>
<div class="t tc" style="left:7.50px;top:462.38px;font-size:9.0px;color:#3a3a3a;font-weight:normal;font-style:normal;transform:translateX(-50%) scaleX(0.8);">19</div>
<div class="r" style="left:0px;top:467px;width:14px;height:1px;background:#c6c6c6;"></div>
<div class="t tc" style="left:7.50px;top:519.48px;font-size:9.0px;color:#3a3a3a;font-weight:normal;font-style:normal;transform:translateX(-50%) scaleX(0.8);">20</div>
<div class="r" style="left:0px;top:524px;width:14px;height:1px;background:#c6c6c6;"></div>
<div class="t tc" style="left:7.50px;top:530.88px;font-size:9.0px;color:#3a3a3a;font-weight:normal;font-style:normal;transform:translateX(-50%) scaleX(0.8);">21</div>
<div class="r" style="left:0px;top:536px;width:14px;height:1px;background:#c6c6c6;"></div>
<div class="t tc" style="left:7.50px;top:542.38px;font-size:9.0px;color:#3a3a3a;font-weight:normal;font-style:normal;transform:translateX(-50%) scaleX(0.8);">22</div>
<div class="r" style="left:0px;top:547px;width:14px;height:1px;background:#c6c6c6;"></div>
<div class="t tc" style="left:7.50px;top:553.38px;font-size:9.0px;color:#3a3a3a;font-weight:normal;font-style:normal;transform:translateX(-50%) scaleX(0.8);">23</div>
<div class="r" style="left:0px;top:558px;width:14px;height:1px;background:#c6c6c6;"></div>
<div class="t tc" style="left:7.50px;top:564.38px;font-size:9.0px;color:#3a3a3a;font-weight:normal;font-style:normal;transform:translateX(-50%) scaleX(0.8);">24</div>
<div class="r" style="left:0px;top:569px;width:14px;height:1px;background:#c6c6c6;"></div>
<div class="t tc" style="left:7.50px;top:575.38px;font-size:9.0px;color:#3a3a3a;font-weight:normal;font-style:normal;transform:translateX(-50%) scaleX(0.8);">25</div>
<div class="r" style="left:0px;top:580px;width:14px;height:1px;background:#c6c6c6;"></div>
<div class="t tc" style="left:7.50px;top:586.38px;font-size:9.0px;color:#3a3a3a;font-weight:normal;font-style:normal;transform:translateX(-50%) scaleX(0.8);">26</div>
<div class="r" style="left:0px;top:591px;width:14px;height:1px;background:#c6c6c6;"></div>
<div class="t tc" style="left:7.50px;top:597.38px;font-size:9.0px;color:#3a3a3a;font-weight:normal;font-style:normal;transform:translateX(-50%) scaleX(0.8);">27</div>
<div class="t tc" style="left:7.50px;top:608.38px;font-size:9.0px;color:#3a3a3a;font-weight:normal;font-style:normal;transform:translateX(-50%) scaleX(0.8);">30</div>
<div class="r" style="left:0px;top:613px;width:14px;height:1px;background:#c6c6c6;"></div>
<div class="t tc" style="left:7.50px;top:619.38px;font-size:9.0px;color:#3a3a3a;font-weight:normal;font-style:normal;transform:translateX(-50%) scaleX(0.8);">31</div>
<div class="r" style="left:0px;top:624px;width:14px;height:1px;background:#c6c6c6;"></div>
<div class="t tc" style="left:7.50px;top:630.38px;font-size:9.0px;color:#3a3a3a;font-weight:normal;font-style:normal;transform:translateX(-50%) scaleX(0.8);">32</div>
<div class="r" style="left:0px;top:635px;width:14px;height:1px;background:#c6c6c6;"></div>
<div class="t tc" style="left:7.50px;top:710.48px;font-size:9.0px;color:#3a3a3a;font-weight:normal;font-style:normal;transform:translateX(-50%) scaleX(0.8);">33</div>
<div class="r" style="left:0px;top:715px;width:14px;height:1px;background:#c6c6c6;"></div>
<div class="t tc" style="left:7.50px;top:721.38px;font-size:9.0px;color:#3a3a3a;font-weight:normal;font-style:normal;transform:translateX(-50%) scaleX(0.8);">34</div>
<div class="r" style="left:0px;top:726px;width:14px;height:1px;background:#c6c6c6;"></div>
<div class="t tc" style="left:7.50px;top:731.88px;font-size:9.0px;color:#3a3a3a;font-weight:normal;font-style:normal;transform:translateX(-50%) scaleX(0.8);">35</div>
<div class="r" style="left:0px;top:736px;width:14px;height:1px;background:#c6c6c6;"></div>
<div class="t tc" style="left:7.50px;top:743.38px;font-size:9.0px;color:#3a3a3a;font-weight:normal;font-style:normal;transform:translateX(-50%) scaleX(0.8);">36</div>
<div class="r" style="left:0px;top:749px;width:14px;height:1px;background:#c6c6c6;"></div>
<div class="t tc" style="left:7.50px;top:767.48px;font-size:9.0px;color:#3a3a3a;font-weight:normal;font-style:normal;transform:translateX(-50%) scaleX(0.8);">37</div>
<div class="r" style="left:0px;top:772px;width:14px;height:1px;background:#c6c6c6;"></div>
<div class="t tc" style="left:7.50px;top:778.38px;font-size:9.0px;color:#3a3a3a;font-weight:normal;font-style:normal;transform:translateX(-50%) scaleX(0.8);">38</div>
<div class="r" style="left:0px;top:783px;width:14px;height:1px;background:#c6c6c6;"></div>
<div class="t tc" style="left:7.50px;top:789.38px;font-size:9.0px;color:#3a3a3a;font-weight:normal;font-style:normal;transform:translateX(-50%) scaleX(0.8);">39</div>
<div class="r" style="left:0px;top:794px;width:14px;height:1px;background:#c6c6c6;"></div>
<div class="t tc" style="left:7.50px;top:800.38px;font-size:9.0px;color:#3a3a3a;font-weight:normal;font-style:normal;transform:translateX(-50%) scaleX(0.8);">40</div>
<div class="r" style="left:0px;top:805px;width:14px;height:1px;background:#c6c6c6;"></div>
<div class="t tc" style="left:7.50px;top:811.38px;font-size:9.0px;color:#3a3a3a;font-weight:normal;font-style:normal;transform:translateX(-50%) scaleX(0.8);">41</div>
<div class="r" style="left:0px;top:816px;width:14px;height:1px;background:#c6c6c6;"></div>
<div class="t tc" style="left:7.50px;top:822.38px;font-size:9.0px;color:#3a3a3a;font-weight:normal;font-style:normal;transform:translateX(-50%) scaleX(0.8);">42</div>
<div class="r" style="left:0px;top:827px;width:14px;height:1px;background:#c6c6c6;"></div>
<div class="t tc" style="left:7.50px;top:833.38px;font-size:9.0px;color:#3a3a3a;font-weight:normal;font-style:normal;transform:translateX(-50%) scaleX(0.8);">43</div>
<div class="r" style="left:0px;top:838px;width:14px;height:1px;background:#c6c6c6;"></div>
<div class="t tc" style="left:7.50px;top:844.38px;font-size:9.0px;color:#3a3a3a;font-weight:normal;font-style:normal;transform:translateX(-50%) scaleX(0.8);">44</div>
<div class="r" style="left:0px;top:849px;width:14px;height:1px;background:#c6c6c6;"></div>
<div class="t tc" style="left:7.50px;top:855.38px;font-size:9.0px;color:#3a3a3a;font-weight:normal;font-style:normal;transform:translateX(-50%) scaleX(0.8);">45</div>
<div class="r" style="left:0px;top:860px;width:14px;height:1px;background:#c6c6c6;"></div>
<div class="t tc" style="left:7.50px;top:866.88px;font-size:9.0px;color:#3a3a3a;font-weight:normal;font-style:normal;transform:translateX(-50%) scaleX(0.8);">46</div>
<div class="r" style="left:0px;top:872px;width:14px;height:1px;background:#c6c6c6;"></div>
<div class="t tc" style="left:7.50px;top:878.88px;font-size:9.0px;color:#3a3a3a;font-weight:normal;font-style:normal;transform:translateX(-50%) scaleX(0.8);">47</div>
<div class="r" style="left:0px;top:884px;width:14px;height:1px;background:#c6c6c6;"></div>
<div class="t tc" style="left:7.50px;top:890.88px;font-size:9.0px;color:#3a3a3a;font-weight:normal;font-style:normal;transform:translateX(-50%) scaleX(0.8);">48</div>
<div class="r" style="left:0px;top:896px;width:14px;height:1px;background:#c6c6c6;"></div>
<div class="t tc" style="left:7.50px;top:901.88px;font-size:9.0px;color:#3a3a3a;font-weight:normal;font-style:normal;transform:translateX(-50%) scaleX(0.8);">49</div>
<div class="r" style="left:0px;top:906px;width:14px;height:1px;background:#c6c6c6;"></div>
<div class="t tc" style="left:7.50px;top:967.48px;font-size:9.0px;color:#3a3a3a;font-weight:normal;font-style:normal;transform:translateX(-50%) scaleX(0.8);">50</div>
<div class="r" style="left:0px;top:972px;width:14px;height:1px;background:#c6c6c6;"></div>
<div class="t tc" style="left:7.50px;top:978.88px;font-size:9.0px;color:#3a3a3a;font-weight:normal;font-style:normal;transform:translateX(-50%) scaleX(0.8);">51</div>
<div class="r" style="left:0px;top:984px;width:14px;height:1px;background:#c6c6c6;"></div>
<div class="t tc" style="left:7.50px;top:990.38px;font-size:9.0px;color:#3a3a3a;font-weight:normal;font-style:normal;transform:translateX(-50%) scaleX(0.8);">52</div>
<div class="r" style="left:0px;top:600px;width:14px;height:1px;background:#c6c6c6;"></div>
<div class="r" style="left:0px;top:604px;width:14px;height:1px;background:#c6c6c6;"></div>
<div class="r" style="left:14px;top:263px;width:596px;height:1px;background:#d9d9d9;"></div>
<div class="r" style="left:14px;top:274px;width:596px;height:1px;background:#d9d9d9;"></div>
<div class="r" style="left:14px;top:287px;width:596px;height:1px;background:#d9d9d9;"></div>
<div class="r" style="left:14px;top:298px;width:596px;height:1px;background:#d9d9d9;"></div>
<div class="r" style="left:14px;top:309px;width:596px;height:1px;background:#d9d9d9;"></div>
<div class="r" style="left:14px;top:320px;width:596px;height:1px;background:#d9d9d9;"></div>
<div class="r" style="left:14px;top:331px;width:596px;height:1px;background:#d9d9d9;"></div>
<div class="r" style="left:14px;top:341px;width:596px;height:1px;background:#d9d9d9;"></div>
<div class="r" style="left:14px;top:352px;width:596px;height:1px;background:#d9d9d9;"></div>
<div class="r" style="left:14px;top:365px;width:596px;height:1px;background:#d9d9d9;"></div>
<div class="r" style="left:14px;top:375px;width:596px;height:1px;background:#d9d9d9;"></div>
<div class="r" style="left:14px;top:386px;width:596px;height:1px;background:#d9d9d9;"></div>
<div class="r" style="left:14px;top:399px;width:596px;height:1px;background:#d9d9d9;"></div>
<div class="r" style="left:14px;top:410px;width:596px;height:1px;background:#d9d9d9;"></div>
<div class="r" style="left:14px;top:424px;width:596px;height:1px;background:#d9d9d9;"></div>
<div class="r" style="left:14px;top:434px;width:596px;height:1px;background:#d9d9d9;"></div>
<div class="r" style="left:14px;top:445px;width:596px;height:1px;background:#d9d9d9;"></div>
<div class="r" style="left:14px;top:456px;width:596px;height:1px;background:#d9d9d9;"></div>
<div class="r" style="left:14px;top:467px;width:596px;height:1px;background:#d9d9d9;"></div>
<div class="r" style="left:14px;top:524px;width:596px;height:1px;background:#d9d9d9;"></div>
<div class="r" style="left:14px;top:536px;width:596px;height:1px;background:#d9d9d9;"></div>
<div class="r" style="left:14px;top:547px;width:596px;height:1px;background:#d9d9d9;"></div>
<div class="r" style="left:14px;top:558px;width:596px;height:1px;background:#d9d9d9;"></div>
<div class="r" style="left:14px;top:569px;width:596px;height:1px;background:#d9d9d9;"></div>
<div class="r" style="left:14px;top:580px;width:596px;height:1px;background:#d9d9d9;"></div>
<div class="r" style="left:14px;top:591px;width:596px;height:1px;background:#d9d9d9;"></div>
<div class="r" style="left:14px;top:602px;width:596px;height:1px;background:#d9d9d9;"></div>
<div class="r" style="left:14px;top:613px;width:596px;height:1px;background:#d9d9d9;"></div>
<div class="r" style="left:14px;top:624px;width:596px;height:1px;background:#d9d9d9;"></div>
<div class="r" style="left:14px;top:635px;width:596px;height:1px;background:#d9d9d9;"></div>
<div class="r" style="left:14px;top:715px;width:596px;height:1px;background:#d9d9d9;"></div>
<div class="r" style="left:14px;top:726px;width:596px;height:1px;background:#d9d9d9;"></div>
<div class="r" style="left:14px;top:736px;width:596px;height:1px;background:#d9d9d9;"></div>
<div class="r" style="left:14px;top:749px;width:596px;height:1px;background:#d9d9d9;"></div>
<div class="r" style="left:14px;top:772px;width:596px;height:1px;background:#d9d9d9;"></div>
<div class="r" style="left:14px;top:783px;width:596px;height:1px;background:#d9d9d9;"></div>
<div class="r" style="left:14px;top:794px;width:596px;height:1px;background:#d9d9d9;"></div>
<div class="r" style="left:14px;top:805px;width:596px;height:1px;background:#d9d9d9;"></div>
<div class="r" style="left:14px;top:816px;width:596px;height:1px;background:#d9d9d9;"></div>
<div class="r" style="left:14px;top:827px;width:596px;height:1px;background:#d9d9d9;"></div>
<div class="r" style="left:14px;top:838px;width:596px;height:1px;background:#d9d9d9;"></div>
<div class="r" style="left:14px;top:849px;width:596px;height:1px;background:#d9d9d9;"></div>
<div class="r" style="left:14px;top:860px;width:596px;height:1px;background:#d9d9d9;"></div>
<div class="r" style="left:14px;top:872px;width:596px;height:1px;background:#d9d9d9;"></div>
<div class="r" style="left:14px;top:884px;width:596px;height:1px;background:#d9d9d9;"></div>
<div class="r" style="left:14px;top:896px;width:596px;height:1px;background:#d9d9d9;"></div>
<div class="r" style="left:14px;top:906px;width:596px;height:1px;background:#d9d9d9;"></div>
<div class="r" style="left:14px;top:972px;width:596px;height:1px;background:#d9d9d9;"></div>
<div class="r" style="left:14px;top:984px;width:596px;height:1px;background:#d9d9d9;"></div>
<div class="r" style="left:38px;top:254px;width:1px;height:9px;background:#d9d9d9;"></div>
<div class="r" style="left:258px;top:254px;width:1px;height:9px;background:#d9d9d9;"></div>
<div class="r" style="left:307px;top:254px;width:1px;height:9px;background:#d9d9d9;"></div>
<div class="r" style="left:345px;top:254px;width:1px;height:9px;background:#d9d9d9;"></div>
<div class="r" style="left:388px;top:254px;width:1px;height:9px;background:#d9d9d9;"></div>
<div class="r" style="left:424px;top:254px;width:1px;height:9px;background:#d9d9d9;"></div>
<div class="r" style="left:465px;top:254px;width:1px;height:9px;background:#d9d9d9;"></div>
<div class="r" style="left:508px;top:254px;width:1px;height:9px;background:#d9d9d9;"></div>
<div class="r" style="left:563px;top:254px;width:1px;height:9px;background:#d9d9d9;"></div>
<div class="r" style="left:38px;top:264px;width:1px;height:10px;background:#d9d9d9;"></div>
<div class="r" style="left:87px;top:264px;width:1px;height:10px;background:#d9d9d9;"></div>
<div class="r" style="left:258px;top:264px;width:1px;height:10px;background:#d9d9d9;"></div>
<div class="r" style="left:307px;top:264px;width:1px;height:10px;background:#d9d9d9;"></div>
<div class="r" style="left:345px;top:264px;width:1px;height:10px;background:#d9d9d9;"></div>
<div class="r" style="left:388px;top:264px;width:1px;height:10px;background:#d9d9d9;"></div>
<div class="r" style="left:424px;top:264px;width:1px;height:10px;background:#d9d9d9;"></div>
<div class="r" style="left:465px;top:264px;width:1px;height:10px;background:#d9d9d9;"></div>
<div class="r" style="left:508px;top:264px;width:1px;height:10px;background:#d9d9d9;"></div>
<div class="r" style="left:38px;top:275px;width:1px;height:12px;background:#d9d9d9;"></div>
<div class="r" style="left:345px;top:275px;width:1px;height:12px;background:#d9d9d9;"></div>
<div class="r" style="left:388px;top:275px;width:1px;height:12px;background:#d9d9d9;"></div>
<div class="r" style="left:38px;top:288px;width:1px;height:10px;background:#d9d9d9;"></div>
<div class="r" style="left:345px;top:288px;width:1px;height:10px;background:#d9d9d9;"></div>
<div class="r" style="left:388px;top:288px;width:1px;height:10px;background:#d9d9d9;"></div>
<div class="r" style="left:38px;top:299px;width:1px;height:10px;background:#d9d9d9;"></div>
<div class="r" style="left:87px;top:299px;width:1px;height:10px;background:#d9d9d9;"></div>
<div class="r" style="left:258px;top:299px;width:1px;height:10px;background:#d9d9d9;"></div>
<div class="r" style="left:307px;top:299px;width:1px;height:10px;background:#d9d9d9;"></div>
<div class="r" style="left:345px;top:299px;width:1px;height:10px;background:#d9d9d9;"></div>
<div class="r" style="left:388px;top:299px;width:1px;height:10px;background:#d9d9d9;"></div>
<div class="r" style="left:424px;top:299px;width:1px;height:10px;background:#d9d9d9;"></div>
<div class="r" style="left:465px;top:299px;width:1px;height:10px;background:#d9d9d9;"></div>
<div class="r" style="left:508px;top:299px;width:1px;height:10px;background:#d9d9d9;"></div>
<div class="r" style="left:563px;top:299px;width:1px;height:10px;background:#d9d9d9;"></div>
<div class="r" style="left:38px;top:310px;width:1px;height:10px;background:#d9d9d9;"></div>
<div class="r" style="left:345px;top:310px;width:1px;height:10px;background:#d9d9d9;"></div>
<div class="r" style="left:388px;top:310px;width:1px;height:10px;background:#d9d9d9;"></div>
<div class="r" style="left:38px;top:321px;width:1px;height:10px;background:#d9d9d9;"></div>
<div class="r" style="left:345px;top:321px;width:1px;height:10px;background:#d9d9d9;"></div>
<div class="r" style="left:388px;top:321px;width:1px;height:10px;background:#d9d9d9;"></div>
<div class="r" style="left:38px;top:332px;width:1px;height:9px;background:#d9d9d9;"></div>
<div class="r" style="left:87px;top:332px;width:1px;height:9px;background:#d9d9d9;"></div>
<div class="r" style="left:258px;top:332px;width:1px;height:9px;background:#d9d9d9;"></div>
<div class="r" style="left:307px;top:332px;width:1px;height:9px;background:#d9d9d9;"></div>
<div class="r" style="left:345px;top:332px;width:1px;height:9px;background:#d9d9d9;"></div>
<div class="r" style="left:388px;top:332px;width:1px;height:9px;background:#d9d9d9;"></div>
<div class="r" style="left:424px;top:332px;width:1px;height:9px;background:#d9d9d9;"></div>
<div class="r" style="left:465px;top:332px;width:1px;height:9px;background:#d9d9d9;"></div>
<div class="r" style="left:508px;top:332px;width:1px;height:9px;background:#d9d9d9;"></div>
<div class="r" style="left:563px;top:332px;width:1px;height:9px;background:#d9d9d9;"></div>
<div class="r" style="left:38px;top:342px;width:1px;height:10px;background:#d9d9d9;"></div>
<div class="r" style="left:87px;top:342px;width:1px;height:10px;background:#d9d9d9;"></div>
<div class="r" style="left:258px;top:342px;width:1px;height:10px;background:#d9d9d9;"></div>
<div class="r" style="left:307px;top:342px;width:1px;height:10px;background:#d9d9d9;"></div>
<div class="r" style="left:345px;top:342px;width:1px;height:10px;background:#d9d9d9;"></div>
<div class="r" style="left:388px;top:342px;width:1px;height:10px;background:#d9d9d9;"></div>
<div class="r" style="left:424px;top:342px;width:1px;height:10px;background:#d9d9d9;"></div>
<div class="r" style="left:465px;top:342px;width:1px;height:10px;background:#d9d9d9;"></div>
<div class="r" style="left:508px;top:342px;width:1px;height:10px;background:#d9d9d9;"></div>
<div class="r" style="left:563px;top:342px;width:1px;height:10px;background:#d9d9d9;"></div>
<div class="r" style="left:38px;top:376px;width:1px;height:10px;background:#d9d9d9;"></div>
<div class="r" style="left:87px;top:376px;width:1px;height:10px;background:#d9d9d9;"></div>
<div class="r" style="left:258px;top:376px;width:1px;height:10px;background:#d9d9d9;"></div>
<div class="r" style="left:307px;top:376px;width:1px;height:10px;background:#d9d9d9;"></div>
<div class="r" style="left:345px;top:376px;width:1px;height:10px;background:#d9d9d9;"></div>
<div class="r" style="left:388px;top:376px;width:1px;height:10px;background:#d9d9d9;"></div>
<div class="r" style="left:424px;top:376px;width:1px;height:10px;background:#d9d9d9;"></div>
<div class="r" style="left:465px;top:376px;width:1px;height:10px;background:#d9d9d9;"></div>
<div class="r" style="left:508px;top:376px;width:1px;height:10px;background:#d9d9d9;"></div>
<div class="r" style="left:563px;top:376px;width:1px;height:10px;background:#d9d9d9;"></div>
<div class="r" style="left:38px;top:400px;width:1px;height:10px;background:#d9d9d9;"></div>
<div class="r" style="left:87px;top:400px;width:1px;height:10px;background:#d9d9d9;"></div>
<div class="r" style="left:258px;top:400px;width:1px;height:10px;background:#d9d9d9;"></div>
<div class="r" style="left:307px;top:400px;width:1px;height:10px;background:#d9d9d9;"></div>
<div class="r" style="left:345px;top:400px;width:1px;height:10px;background:#d9d9d9;"></div>
<div class="r" style="left:388px;top:400px;width:1px;height:10px;background:#d9d9d9;"></div>
<div class="r" style="left:424px;top:400px;width:1px;height:10px;background:#d9d9d9;"></div>
<div class="r" style="left:465px;top:400px;width:1px;height:10px;background:#d9d9d9;"></div>
<div class="r" style="left:508px;top:400px;width:1px;height:10px;background:#d9d9d9;"></div>
<div class="r" style="left:563px;top:400px;width:1px;height:10px;background:#d9d9d9;"></div>
<div class="r" style="left:38px;top:435px;width:1px;height:10px;background:#d9d9d9;"></div>
<div class="r" style="left:87px;top:435px;width:1px;height:10px;background:#d9d9d9;"></div>
<div class="r" style="left:258px;top:435px;width:1px;height:10px;background:#d9d9d9;"></div>
<div class="r" style="left:307px;top:435px;width:1px;height:10px;background:#d9d9d9;"></div>
<div class="r" style="left:345px;top:435px;width:1px;height:10px;background:#d9d9d9;"></div>
<div class="r" style="left:388px;top:435px;width:1px;height:10px;background:#d9d9d9;"></div>
<div class="r" style="left:424px;top:435px;width:1px;height:10px;background:#d9d9d9;"></div>
<div class="r" style="left:465px;top:435px;width:1px;height:10px;background:#d9d9d9;"></div>
<div class="r" style="left:508px;top:435px;width:1px;height:10px;background:#d9d9d9;"></div>
<div class="r" style="left:563px;top:435px;width:1px;height:10px;background:#d9d9d9;"></div>
<div class="r" style="left:38px;top:457px;width:1px;height:10px;background:#d9d9d9;"></div>
<div class="r" style="left:87px;top:457px;width:1px;height:10px;background:#d9d9d9;"></div>
<div class="r" style="left:258px;top:457px;width:1px;height:10px;background:#d9d9d9;"></div>
<div class="r" style="left:307px;top:457px;width:1px;height:10px;background:#d9d9d9;"></div>
<div class="r" style="left:345px;top:457px;width:1px;height:10px;background:#d9d9d9;"></div>
<div class="r" style="left:388px;top:457px;width:1px;height:10px;background:#d9d9d9;"></div>
<div class="r" style="left:424px;top:457px;width:1px;height:10px;background:#d9d9d9;"></div>
<div class="r" style="left:465px;top:457px;width:1px;height:10px;background:#d9d9d9;"></div>
<div class="r" style="left:508px;top:457px;width:1px;height:10px;background:#d9d9d9;"></div>
<div class="r" style="left:563px;top:457px;width:1px;height:10px;background:#d9d9d9;"></div>
<div class="r" style="left:38px;top:468px;width:1px;height:56px;background:#d9d9d9;"></div>
<div class="r" style="left:87px;top:468px;width:1px;height:56px;background:#d9d9d9;"></div>
<div class="r" style="left:258px;top:468px;width:1px;height:56px;background:#d9d9d9;"></div>
<div class="r" style="left:307px;top:468px;width:1px;height:56px;background:#d9d9d9;"></div>
<div class="r" style="left:345px;top:468px;width:1px;height:56px;background:#d9d9d9;"></div>
<div class="r" style="left:388px;top:468px;width:1px;height:56px;background:#d9d9d9;"></div>
<div class="r" style="left:424px;top:468px;width:1px;height:56px;background:#d9d9d9;"></div>
<div class="r" style="left:465px;top:468px;width:1px;height:56px;background:#d9d9d9;"></div>
<div class="r" style="left:508px;top:468px;width:1px;height:56px;background:#d9d9d9;"></div>
<div class="r" style="left:563px;top:468px;width:1px;height:56px;background:#d9d9d9;"></div>
<div class="r" style="left:38px;top:525px;width:1px;height:11px;background:#d9d9d9;"></div>
<div class="r" style="left:87px;top:525px;width:1px;height:11px;background:#d9d9d9;"></div>
<div class="r" style="left:258px;top:525px;width:1px;height:11px;background:#d9d9d9;"></div>
<div class="r" style="left:307px;top:525px;width:1px;height:11px;background:#d9d9d9;"></div>
<div class="r" style="left:465px;top:525px;width:1px;height:11px;background:#d9d9d9;"></div>
<div class="r" style="left:508px;top:525px;width:1px;height:11px;background:#d9d9d9;"></div>
<div class="r" style="left:563px;top:525px;width:1px;height:11px;background:#d9d9d9;"></div>
<div class="r" style="left:38px;top:537px;width:1px;height:10px;background:#d9d9d9;"></div>
<div class="r" style="left:87px;top:537px;width:1px;height:10px;background:#d9d9d9;"></div>
<div class="r" style="left:258px;top:537px;width:1px;height:10px;background:#d9d9d9;"></div>
<div class="r" style="left:307px;top:537px;width:1px;height:10px;background:#d9d9d9;"></div>
<div class="r" style="left:465px;top:537px;width:1px;height:10px;background:#d9d9d9;"></div>
<div class="r" style="left:508px;top:537px;width:1px;height:10px;background:#d9d9d9;"></div>
<div class="r" style="left:563px;top:537px;width:1px;height:10px;background:#d9d9d9;"></div>
<div class="r" style="left:38px;top:548px;width:1px;height:10px;background:#d9d9d9;"></div>
<div class="r" style="left:87px;top:548px;width:1px;height:10px;background:#d9d9d9;"></div>
<div class="r" style="left:258px;top:548px;width:1px;height:10px;background:#d9d9d9;"></div>
<div class="r" style="left:307px;top:548px;width:1px;height:10px;background:#d9d9d9;"></div>
<div class="r" style="left:465px;top:548px;width:1px;height:10px;background:#d9d9d9;"></div>
<div class="r" style="left:508px;top:548px;width:1px;height:10px;background:#d9d9d9;"></div>
<div class="r" style="left:563px;top:548px;width:1px;height:10px;background:#d9d9d9;"></div>
<div class="r" style="left:38px;top:559px;width:1px;height:10px;background:#d9d9d9;"></div>
<div class="r" style="left:87px;top:559px;width:1px;height:10px;background:#d9d9d9;"></div>
<div class="r" style="left:258px;top:559px;width:1px;height:10px;background:#d9d9d9;"></div>
<div class="r" style="left:307px;top:559px;width:1px;height:10px;background:#d9d9d9;"></div>
<div class="r" style="left:465px;top:559px;width:1px;height:10px;background:#d9d9d9;"></div>
<div class="r" style="left:508px;top:559px;width:1px;height:10px;background:#d9d9d9;"></div>
<div class="r" style="left:563px;top:559px;width:1px;height:10px;background:#d9d9d9;"></div>
<div class="r" style="left:38px;top:570px;width:1px;height:10px;background:#d9d9d9;"></div>
<div class="r" style="left:87px;top:570px;width:1px;height:10px;background:#d9d9d9;"></div>
<div class="r" style="left:258px;top:570px;width:1px;height:10px;background:#d9d9d9;"></div>
<div class="r" style="left:307px;top:570px;width:1px;height:10px;background:#d9d9d9;"></div>
<div class="r" style="left:465px;top:570px;width:1px;height:10px;background:#d9d9d9;"></div>
<div class="r" style="left:508px;top:570px;width:1px;height:10px;background:#d9d9d9;"></div>
<div class="r" style="left:563px;top:570px;width:1px;height:10px;background:#d9d9d9;"></div>
<div class="r" style="left:38px;top:581px;width:1px;height:10px;background:#d9d9d9;"></div>
<div class="r" style="left:87px;top:581px;width:1px;height:10px;background:#d9d9d9;"></div>
<div class="r" style="left:258px;top:581px;width:1px;height:10px;background:#d9d9d9;"></div>
<div class="r" style="left:307px;top:581px;width:1px;height:10px;background:#d9d9d9;"></div>
<div class="r" style="left:465px;top:581px;width:1px;height:10px;background:#d9d9d9;"></div>
<div class="r" style="left:508px;top:581px;width:1px;height:10px;background:#d9d9d9;"></div>
<div class="r" style="left:563px;top:581px;width:1px;height:10px;background:#d9d9d9;"></div>
<div class="r" style="left:38px;top:592px;width:1px;height:10px;background:#d9d9d9;"></div>
<div class="r" style="left:87px;top:592px;width:1px;height:10px;background:#d9d9d9;"></div>
<div class="r" style="left:258px;top:592px;width:1px;height:10px;background:#d9d9d9;"></div>
<div class="r" style="left:307px;top:592px;width:1px;height:10px;background:#d9d9d9;"></div>
<div class="r" style="left:465px;top:592px;width:1px;height:10px;background:#d9d9d9;"></div>
<div class="r" style="left:508px;top:592px;width:1px;height:10px;background:#d9d9d9;"></div>
<div class="r" style="left:563px;top:592px;width:1px;height:10px;background:#d9d9d9;"></div>
<div class="r" style="left:38px;top:603px;width:1px;height:10px;background:#d9d9d9;"></div>
<div class="r" style="left:87px;top:603px;width:1px;height:10px;background:#d9d9d9;"></div>
<div class="r" style="left:258px;top:603px;width:1px;height:10px;background:#d9d9d9;"></div>
<div class="r" style="left:307px;top:603px;width:1px;height:10px;background:#d9d9d9;"></div>
<div class="r" style="left:345px;top:603px;width:1px;height:10px;background:#d9d9d9;"></div>
<div class="r" style="left:388px;top:603px;width:1px;height:10px;background:#d9d9d9;"></div>
<div class="r" style="left:424px;top:603px;width:1px;height:10px;background:#d9d9d9;"></div>
<div class="r" style="left:465px;top:603px;width:1px;height:10px;background:#d9d9d9;"></div>
<div class="r" style="left:508px;top:603px;width:1px;height:10px;background:#d9d9d9;"></div>
<div class="r" style="left:563px;top:603px;width:1px;height:10px;background:#d9d9d9;"></div>
<div class="r" style="left:307px;top:614px;width:1px;height:10px;background:#d9d9d9;"></div>
<div class="r" style="left:345px;top:614px;width:1px;height:10px;background:#d9d9d9;"></div>
<div class="r" style="left:388px;top:614px;width:1px;height:10px;background:#d9d9d9;"></div>
<div class="r" style="left:424px;top:614px;width:1px;height:10px;background:#d9d9d9;"></div>
<div class="r" style="left:465px;top:614px;width:1px;height:10px;background:#d9d9d9;"></div>
<div class="r" style="left:508px;top:614px;width:1px;height:10px;background:#d9d9d9;"></div>
<div class="r" style="left:563px;top:614px;width:1px;height:10px;background:#d9d9d9;"></div>
<div class="r" style="left:38px;top:636px;width:1px;height:79px;background:#d9d9d9;"></div>
<div class="r" style="left:87px;top:636px;width:1px;height:79px;background:#d9d9d9;"></div>
<div class="r" style="left:258px;top:636px;width:1px;height:79px;background:#d9d9d9;"></div>
<div class="r" style="left:307px;top:636px;width:1px;height:79px;background:#d9d9d9;"></div>
<div class="r" style="left:345px;top:636px;width:1px;height:79px;background:#d9d9d9;"></div>
<div class="r" style="left:388px;top:636px;width:1px;height:79px;background:#d9d9d9;"></div>
<div class="r" style="left:424px;top:636px;width:1px;height:79px;background:#d9d9d9;"></div>
<div class="r" style="left:465px;top:636px;width:1px;height:79px;background:#d9d9d9;"></div>
<div class="r" style="left:508px;top:636px;width:1px;height:79px;background:#d9d9d9;"></div>
<div class="r" style="left:563px;top:636px;width:1px;height:79px;background:#d9d9d9;"></div>
<div class="r" style="left:38px;top:716px;width:1px;height:10px;background:#d9d9d9;"></div>
<div class="r" style="left:87px;top:716px;width:1px;height:10px;background:#d9d9d9;"></div>
<div class="r" style="left:258px;top:716px;width:1px;height:10px;background:#d9d9d9;"></div>
<div class="r" style="left:307px;top:716px;width:1px;height:10px;background:#d9d9d9;"></div>
<div class="r" style="left:345px;top:716px;width:1px;height:10px;background:#d9d9d9;"></div>
<div class="r" style="left:388px;top:716px;width:1px;height:10px;background:#d9d9d9;"></div>
<div class="r" style="left:424px;top:716px;width:1px;height:10px;background:#d9d9d9;"></div>
<div class="r" style="left:465px;top:716px;width:1px;height:10px;background:#d9d9d9;"></div>
<div class="r" style="left:508px;top:716px;width:1px;height:10px;background:#d9d9d9;"></div>
<div class="r" style="left:563px;top:716px;width:1px;height:10px;background:#d9d9d9;"></div>
<div class="r" style="left:38px;top:727px;width:1px;height:9px;background:#d9d9d9;"></div>
<div class="r" style="left:87px;top:727px;width:1px;height:9px;background:#d9d9d9;"></div>
<div class="r" style="left:258px;top:727px;width:1px;height:9px;background:#d9d9d9;"></div>
<div class="r" style="left:307px;top:727px;width:1px;height:9px;background:#d9d9d9;"></div>
<div class="r" style="left:345px;top:727px;width:1px;height:9px;background:#d9d9d9;"></div>
<div class="r" style="left:388px;top:727px;width:1px;height:9px;background:#d9d9d9;"></div>
<div class="r" style="left:424px;top:727px;width:1px;height:9px;background:#d9d9d9;"></div>
<div class="r" style="left:465px;top:727px;width:1px;height:9px;background:#d9d9d9;"></div>
<div class="r" style="left:508px;top:727px;width:1px;height:9px;background:#d9d9d9;"></div>
<div class="r" style="left:563px;top:727px;width:1px;height:9px;background:#d9d9d9;"></div>
<div class="r" style="left:38px;top:750px;width:1px;height:22px;background:#d9d9d9;"></div>
<div class="r" style="left:87px;top:750px;width:1px;height:22px;background:#d9d9d9;"></div>
<div class="r" style="left:258px;top:750px;width:1px;height:22px;background:#d9d9d9;"></div>
<div class="r" style="left:307px;top:750px;width:1px;height:22px;background:#d9d9d9;"></div>
<div class="r" style="left:345px;top:750px;width:1px;height:22px;background:#d9d9d9;"></div>
<div class="r" style="left:388px;top:750px;width:1px;height:22px;background:#d9d9d9;"></div>
<div class="r" style="left:424px;top:750px;width:1px;height:22px;background:#d9d9d9;"></div>
<div class="r" style="left:465px;top:750px;width:1px;height:22px;background:#d9d9d9;"></div>
<div class="r" style="left:508px;top:750px;width:1px;height:22px;background:#d9d9d9;"></div>
<div class="r" style="left:563px;top:750px;width:1px;height:22px;background:#d9d9d9;"></div>
<div class="r" style="left:38px;top:773px;width:1px;height:10px;background:#d9d9d9;"></div>
<div class="r" style="left:87px;top:773px;width:1px;height:10px;background:#d9d9d9;"></div>
<div class="r" style="left:258px;top:773px;width:1px;height:10px;background:#d9d9d9;"></div>
<div class="r" style="left:307px;top:773px;width:1px;height:10px;background:#d9d9d9;"></div>
<div class="r" style="left:345px;top:773px;width:1px;height:10px;background:#d9d9d9;"></div>
<div class="r" style="left:388px;top:773px;width:1px;height:10px;background:#d9d9d9;"></div>
<div class="r" style="left:424px;top:773px;width:1px;height:10px;background:#d9d9d9;"></div>
<div class="r" style="left:465px;top:773px;width:1px;height:10px;background:#d9d9d9;"></div>
<div class="r" style="left:508px;top:773px;width:1px;height:10px;background:#d9d9d9;"></div>
<div class="r" style="left:563px;top:773px;width:1px;height:10px;background:#d9d9d9;"></div>
<div class="r" style="left:38px;top:784px;width:1px;height:10px;background:#d9d9d9;"></div>
<div class="r" style="left:87px;top:784px;width:1px;height:10px;background:#d9d9d9;"></div>
<div class="r" style="left:258px;top:784px;width:1px;height:10px;background:#d9d9d9;"></div>
<div class="r" style="left:307px;top:784px;width:1px;height:10px;background:#d9d9d9;"></div>
<div class="r" style="left:345px;top:784px;width:1px;height:10px;background:#d9d9d9;"></div>
<div class="r" style="left:388px;top:784px;width:1px;height:10px;background:#d9d9d9;"></div>
<div class="r" style="left:424px;top:784px;width:1px;height:10px;background:#d9d9d9;"></div>
<div class="r" style="left:465px;top:784px;width:1px;height:10px;background:#d9d9d9;"></div>
<div class="r" style="left:508px;top:784px;width:1px;height:10px;background:#d9d9d9;"></div>
<div class="r" style="left:563px;top:784px;width:1px;height:10px;background:#d9d9d9;"></div>
<div class="r" style="left:38px;top:795px;width:1px;height:10px;background:#d9d9d9;"></div>
<div class="r" style="left:87px;top:795px;width:1px;height:10px;background:#d9d9d9;"></div>
<div class="r" style="left:258px;top:795px;width:1px;height:10px;background:#d9d9d9;"></div>
<div class="r" style="left:307px;top:795px;width:1px;height:10px;background:#d9d9d9;"></div>
<div class="r" style="left:345px;top:795px;width:1px;height:10px;background:#d9d9d9;"></div>
<div class="r" style="left:388px;top:795px;width:1px;height:10px;background:#d9d9d9;"></div>
<div class="r" style="left:424px;top:795px;width:1px;height:10px;background:#d9d9d9;"></div>
<div class="r" style="left:465px;top:795px;width:1px;height:10px;background:#d9d9d9;"></div>
<div class="r" style="left:508px;top:795px;width:1px;height:10px;background:#d9d9d9;"></div>
<div class="r" style="left:563px;top:795px;width:1px;height:10px;background:#d9d9d9;"></div>
<div class="r" style="left:38px;top:806px;width:1px;height:10px;background:#d9d9d9;"></div>
<div class="r" style="left:87px;top:806px;width:1px;height:10px;background:#d9d9d9;"></div>
<div class="r" style="left:258px;top:806px;width:1px;height:10px;background:#d9d9d9;"></div>
<div class="r" style="left:307px;top:806px;width:1px;height:10px;background:#d9d9d9;"></div>
<div class="r" style="left:345px;top:806px;width:1px;height:10px;background:#d9d9d9;"></div>
<div class="r" style="left:388px;top:806px;width:1px;height:10px;background:#d9d9d9;"></div>
<div class="r" style="left:424px;top:806px;width:1px;height:10px;background:#d9d9d9;"></div>
<div class="r" style="left:465px;top:806px;width:1px;height:10px;background:#d9d9d9;"></div>
<div class="r" style="left:508px;top:806px;width:1px;height:10px;background:#d9d9d9;"></div>
<div class="r" style="left:563px;top:806px;width:1px;height:10px;background:#d9d9d9;"></div>
<div class="r" style="left:38px;top:817px;width:1px;height:10px;background:#d9d9d9;"></div>
<div class="r" style="left:87px;top:817px;width:1px;height:10px;background:#d9d9d9;"></div>
<div class="r" style="left:258px;top:817px;width:1px;height:10px;background:#d9d9d9;"></div>
<div class="r" style="left:307px;top:817px;width:1px;height:10px;background:#d9d9d9;"></div>
<div class="r" style="left:345px;top:817px;width:1px;height:10px;background:#d9d9d9;"></div>
<div class="r" style="left:388px;top:817px;width:1px;height:10px;background:#d9d9d9;"></div>
<div class="r" style="left:424px;top:817px;width:1px;height:10px;background:#d9d9d9;"></div>
<div class="r" style="left:465px;top:817px;width:1px;height:10px;background:#d9d9d9;"></div>
<div class="r" style="left:508px;top:817px;width:1px;height:10px;background:#d9d9d9;"></div>
<div class="r" style="left:563px;top:817px;width:1px;height:10px;background:#d9d9d9;"></div>
<div class="r" style="left:38px;top:828px;width:1px;height:10px;background:#d9d9d9;"></div>
<div class="r" style="left:87px;top:828px;width:1px;height:10px;background:#d9d9d9;"></div>
<div class="r" style="left:258px;top:828px;width:1px;height:10px;background:#d9d9d9;"></div>
<div class="r" style="left:307px;top:828px;width:1px;height:10px;background:#d9d9d9;"></div>
<div class="r" style="left:345px;top:828px;width:1px;height:10px;background:#d9d9d9;"></div>
<div class="r" style="left:388px;top:828px;width:1px;height:10px;background:#d9d9d9;"></div>
<div class="r" style="left:424px;top:828px;width:1px;height:10px;background:#d9d9d9;"></div>
<div class="r" style="left:465px;top:828px;width:1px;height:10px;background:#d9d9d9;"></div>
<div class="r" style="left:508px;top:828px;width:1px;height:10px;background:#d9d9d9;"></div>
<div class="r" style="left:563px;top:828px;width:1px;height:10px;background:#d9d9d9;"></div>
<div class="r" style="left:38px;top:839px;width:1px;height:10px;background:#d9d9d9;"></div>
<div class="r" style="left:87px;top:839px;width:1px;height:10px;background:#d9d9d9;"></div>
<div class="r" style="left:258px;top:839px;width:1px;height:10px;background:#d9d9d9;"></div>
<div class="r" style="left:307px;top:839px;width:1px;height:10px;background:#d9d9d9;"></div>
<div class="r" style="left:345px;top:839px;width:1px;height:10px;background:#d9d9d9;"></div>
<div class="r" style="left:388px;top:839px;width:1px;height:10px;background:#d9d9d9;"></div>
<div class="r" style="left:424px;top:839px;width:1px;height:10px;background:#d9d9d9;"></div>
<div class="r" style="left:465px;top:839px;width:1px;height:10px;background:#d9d9d9;"></div>
<div class="r" style="left:508px;top:839px;width:1px;height:10px;background:#d9d9d9;"></div>
<div class="r" style="left:563px;top:839px;width:1px;height:10px;background:#d9d9d9;"></div>
<div class="r" style="left:38px;top:850px;width:1px;height:10px;background:#d9d9d9;"></div>
<div class="r" style="left:87px;top:850px;width:1px;height:10px;background:#d9d9d9;"></div>
<div class="r" style="left:258px;top:850px;width:1px;height:10px;background:#d9d9d9;"></div>
<div class="r" style="left:307px;top:850px;width:1px;height:10px;background:#d9d9d9;"></div>
<div class="r" style="left:345px;top:850px;width:1px;height:10px;background:#d9d9d9;"></div>
<div class="r" style="left:388px;top:850px;width:1px;height:10px;background:#d9d9d9;"></div>
<div class="r" style="left:424px;top:850px;width:1px;height:10px;background:#d9d9d9;"></div>
<div class="r" style="left:465px;top:850px;width:1px;height:10px;background:#d9d9d9;"></div>
<div class="r" style="left:508px;top:850px;width:1px;height:10px;background:#d9d9d9;"></div>
<div class="r" style="left:563px;top:850px;width:1px;height:10px;background:#d9d9d9;"></div>
<div class="r" style="left:38px;top:861px;width:1px;height:11px;background:#d9d9d9;"></div>
<div class="r" style="left:87px;top:861px;width:1px;height:11px;background:#d9d9d9;"></div>
<div class="r" style="left:258px;top:861px;width:1px;height:11px;background:#d9d9d9;"></div>
<div class="r" style="left:307px;top:861px;width:1px;height:11px;background:#d9d9d9;"></div>
<div class="r" style="left:345px;top:861px;width:1px;height:11px;background:#d9d9d9;"></div>
<div class="r" style="left:388px;top:861px;width:1px;height:11px;background:#d9d9d9;"></div>
<div class="r" style="left:424px;top:861px;width:1px;height:11px;background:#d9d9d9;"></div>
<div class="r" style="left:508px;top:861px;width:1px;height:11px;background:#d9d9d9;"></div>
<div class="r" style="left:38px;top:873px;width:1px;height:11px;background:#d9d9d9;"></div>
<div class="r" style="left:87px;top:873px;width:1px;height:11px;background:#d9d9d9;"></div>
<div class="r" style="left:258px;top:873px;width:1px;height:11px;background:#d9d9d9;"></div>
<div class="r" style="left:307px;top:873px;width:1px;height:11px;background:#d9d9d9;"></div>
<div class="r" style="left:345px;top:873px;width:1px;height:11px;background:#d9d9d9;"></div>
<div class="r" style="left:388px;top:873px;width:1px;height:11px;background:#d9d9d9;"></div>
<div class="r" style="left:424px;top:873px;width:1px;height:11px;background:#d9d9d9;"></div>
<div class="r" style="left:508px;top:873px;width:1px;height:11px;background:#d9d9d9;"></div>
<div class="r" style="left:38px;top:885px;width:1px;height:11px;background:#d9d9d9;"></div>
<div class="r" style="left:87px;top:885px;width:1px;height:11px;background:#d9d9d9;"></div>
<div class="r" style="left:258px;top:885px;width:1px;height:11px;background:#d9d9d9;"></div>
<div class="r" style="left:307px;top:885px;width:1px;height:11px;background:#d9d9d9;"></div>
<div class="r" style="left:345px;top:885px;width:1px;height:11px;background:#d9d9d9;"></div>
<div class="r" style="left:388px;top:885px;width:1px;height:11px;background:#d9d9d9;"></div>
<div class="r" style="left:424px;top:885px;width:1px;height:11px;background:#d9d9d9;"></div>
<div class="r" style="left:508px;top:885px;width:1px;height:11px;background:#d9d9d9;"></div>
<div class="r" style="left:38px;top:897px;width:1px;height:9px;background:#d9d9d9;"></div>
<div class="r" style="left:87px;top:897px;width:1px;height:9px;background:#d9d9d9;"></div>
<div class="r" style="left:258px;top:897px;width:1px;height:9px;background:#d9d9d9;"></div>
<div class="r" style="left:307px;top:897px;width:1px;height:9px;background:#d9d9d9;"></div>
<div class="r" style="left:345px;top:897px;width:1px;height:9px;background:#d9d9d9;"></div>
<div class="r" style="left:388px;top:897px;width:1px;height:9px;background:#d9d9d9;"></div>
<div class="r" style="left:424px;top:897px;width:1px;height:9px;background:#d9d9d9;"></div>
<div class="r" style="left:465px;top:897px;width:1px;height:9px;background:#d9d9d9;"></div>
<div class="r" style="left:508px;top:897px;width:1px;height:9px;background:#d9d9d9;"></div>
<div class="r" style="left:563px;top:897px;width:1px;height:9px;background:#d9d9d9;"></div>
<div class="r" style="left:38px;top:907px;width:1px;height:65px;background:#d9d9d9;"></div>
<div class="r" style="left:87px;top:907px;width:1px;height:65px;background:#d9d9d9;"></div>
<div class="r" style="left:258px;top:907px;width:1px;height:65px;background:#d9d9d9;"></div>
<div class="r" style="left:307px;top:907px;width:1px;height:65px;background:#d9d9d9;"></div>
<div class="r" style="left:345px;top:907px;width:1px;height:65px;background:#d9d9d9;"></div>
<div class="r" style="left:388px;top:907px;width:1px;height:65px;background:#d9d9d9;"></div>
<div class="r" style="left:424px;top:907px;width:1px;height:65px;background:#d9d9d9;"></div>
<div class="r" style="left:465px;top:907px;width:1px;height:65px;background:#d9d9d9;"></div>
<div class="r" style="left:508px;top:907px;width:1px;height:65px;background:#d9d9d9;"></div>
<div class="r" style="left:563px;top:907px;width:1px;height:65px;background:#d9d9d9;"></div>
<div class="r" style="left:38px;top:973px;width:1px;height:11px;background:#d9d9d9;"></div>
<div class="r" style="left:87px;top:973px;width:1px;height:11px;background:#d9d9d9;"></div>
<div class="r" style="left:258px;top:973px;width:1px;height:11px;background:#d9d9d9;"></div>
<div class="r" style="left:307px;top:973px;width:1px;height:11px;background:#d9d9d9;"></div>
<div class="r" style="left:345px;top:973px;width:1px;height:11px;background:#d9d9d9;"></div>
<div class="r" style="left:388px;top:973px;width:1px;height:11px;background:#d9d9d9;"></div>
<div class="r" style="left:424px;top:973px;width:1px;height:11px;background:#d9d9d9;"></div>
<div class="r" style="left:508px;top:973px;width:1px;height:11px;background:#d9d9d9;"></div>
<div class="r" style="left:38px;top:985px;width:1px;height:5px;background:#d9d9d9;"></div>
<div class="r" style="left:87px;top:985px;width:1px;height:5px;background:#d9d9d9;"></div>
<div class="r" style="left:258px;top:985px;width:1px;height:5px;background:#d9d9d9;"></div>
<div class="r" style="left:307px;top:985px;width:1px;height:5px;background:#d9d9d9;"></div>
<div class="r" style="left:345px;top:985px;width:1px;height:5px;background:#d9d9d9;"></div>
<div class="r" style="left:388px;top:985px;width:1px;height:5px;background:#d9d9d9;"></div>
<div class="r" style="left:424px;top:985px;width:1px;height:5px;background:#d9d9d9;"></div>
<div class="r" style="left:465px;top:985px;width:1px;height:5px;background:#d9d9d9;"></div>
<div class="r" style="left:508px;top:985px;width:1px;height:5px;background:#d9d9d9;"></div>
<div class="r" style="left:563px;top:985px;width:1px;height:5px;background:#d9d9d9;"></div>
<div class="r" style="left:14px;top:365px;width:596px;height:1px;background:#000000;"></div>
<div class="r" style="left:14px;top:399px;width:596px;height:1px;background:#000000;"></div>
<div class="r" style="left:14px;top:424px;width:596px;height:1px;background:#000000;"></div>
<div class="r" style="left:14px;top:456px;width:596px;height:1px;background:#000000;"></div>
<div class="r" style="left:14px;top:635px;width:596px;height:1px;background:#000000;"></div>
<div class="r" style="left:14px;top:860px;width:596px;height:1px;background:#000000;"></div>
<div class="r" style="left:14px;top:972px;width:596px;height:1px;background:#000000;"></div>
<div class="r" style="left:14px;top:715px;width:596px;height:1px;background:#000000;"></div>
<div class="r" style="left:14px;top:726px;width:596px;height:1px;background:#000000;"></div>
<div class="r" style="left:38px;top:635px;width:1px;height:92px;background:#000000;"></div>
<div class="r" style="left:87px;top:635px;width:1px;height:92px;background:#000000;"></div>
<div class="r" style="left:258px;top:635px;width:1px;height:92px;background:#000000;"></div>
<div class="r" style="left:307px;top:635px;width:1px;height:92px;background:#000000;"></div>
<div class="r" style="left:345px;top:635px;width:1px;height:92px;background:#000000;"></div>
<div class="r" style="left:388px;top:635px;width:1px;height:92px;background:#000000;"></div>
<div class="r" style="left:424px;top:635px;width:1px;height:92px;background:#000000;"></div>
<div class="r" style="left:465px;top:635px;width:1px;height:92px;background:#000000;"></div>
<div class="r" style="left:508px;top:635px;width:1px;height:92px;background:#000000;"></div>
<div class="r" style="left:563px;top:635px;width:1px;height:92px;background:#000000;"></div>
<div class="r" style="left:14px;top:253px;width:1px;height:737px;background:#8c8ce0;"></div>
<div class="r" style="left:15px;top:253px;width:1px;height:737px;background:#16167a;"></div>
<div class="r" style="left:14px;top:253px;width:598px;height:2px;background:#20208a;"></div>
<div class="r" style="left:609px;top:253px;width:3px;height:737px;background:#0000cc;"></div>
<div class="r" style="left:15px;top:255px;width:23px;height:9px;background:#ffffff;"></div>
<div class="t" style="left:16.00px;top:260.14px;font-size:7.1px;color:#333333;font-weight:normal;font-style:normal;">Smeta.RU  (495) 974-1589</div>
<div class="t" style="right:1312.50px;top:269.94px;font-size:9.13px;color:#000000;font-weight:normal;font-style:normal;">Форма № 46</div>
<div class="t" style="left:40.80px;top:282.07px;font-size:10.19px;color:#000000;font-weight:bold;font-style:normal;">&quot;СОГЛАСОВАНО&quot;</div>
<div class="t" style="left:390.80px;top:282.07px;font-size:10.19px;color:#000000;font-weight:bold;font-style:normal;">&quot;УТВЕРЖДАЮ&quot;</div>
<div class="t" style="left:40.50px;top:327.01px;font-size:9.2px;color:#000000;font-weight:normal;font-style:normal;">&quot;          &quot;</div>
<div class="t" style="left:155.00px;top:327.01px;font-size:9.2px;color:#000000;font-weight:normal;font-style:normal;">2024 г.</div>
<div class="t" style="left:390.50px;top:327.01px;font-size:9.2px;color:#000000;font-weight:normal;font-style:normal;">&quot;          &quot;</div>
<div class="t" style="left:505.00px;top:327.01px;font-size:9.2px;color:#000000;font-weight:normal;font-style:normal;">2024 г.</div>
<div class="t tc" style="left:312.50px;top:359.62px;font-size:10.03px;color:#000000;font-weight:bold;font-style:normal;">на выполнение работ по замене СПС, СОУЭ и АГПТ</div>
<div class="t tc" style="left:312.50px;top:372.18px;font-size:6.4px;color:#555555;font-weight:normal;font-style:normal;letter-spacing:0.32px;">(наименование стройки и/или объекта)</div>
<div class="t tc" style="left:312.00px;top:393.83px;font-size:10.02px;color:#000000;font-weight:bold;font-style:normal;">ЛОКАЛЬНАЯ СМЕТА № 1.</div>
<div class="t tc" style="left:312.00px;top:418.62px;font-size:10.63px;color:#000000;font-weight:bold;font-style:normal;">СПС</div>
<div class="t tc" style="left:312.50px;top:431.38px;font-size:6.4px;color:#555555;font-weight:normal;font-style:normal;letter-spacing:0.32px;">(наименование работ и затрат)</div>
<div class="t" style="left:16.70px;top:452.33px;font-size:9.43px;color:#000000;font-weight:normal;font-style:normal;">Основание: чертежи №</div>
<div class="t tc" style="left:486.50px;top:474.71px;font-size:9.2px;color:#000000;font-weight:normal;font-style:normal;">В</div>
<div class="t tc" style="left:486.50px;top:485.66px;font-size:9.2px;color:#000000;font-weight:normal;font-style:normal;">базисно</div>
<div class="t tc" style="left:486.50px;top:496.61px;font-size:9.2px;color:#000000;font-weight:normal;font-style:normal;">м</div>
<div class="t tc" style="left:486.50px;top:507.56px;font-size:9.2px;color:#000000;font-weight:normal;font-style:normal;">уровне</div>
<div class="t tc" style="left:486.50px;top:518.51px;font-size:9.2px;color:#000000;font-weight:normal;font-style:normal;">цен</div>
<div class="t tc" style="left:535.50px;top:479.11px;font-size:9.2px;color:#000000;font-weight:normal;font-style:normal;">В</div>
<div class="t tc" style="left:535.50px;top:490.16px;font-size:9.2px;color:#000000;font-weight:normal;font-style:normal;">текущем</div>
<div class="t tc" style="left:535.50px;top:501.21px;font-size:9.2px;color:#000000;font-weight:normal;font-style:normal;">уровне</div>
<div class="t tc" style="left:535.50px;top:512.26px;font-size:9.2px;color:#000000;font-weight:normal;font-style:normal;">цен</div>
<div class="t" style="left:309.70px;top:530.91px;font-size:9.2px;color:#000000;font-weight:bold;font-style:normal;">Сметная стоимость</div>
<div class="t" style="right:1414.70px;top:530.91px;font-size:9.2px;color:#000000;font-weight:bold;font-style:normal;">#######</div>
<div class="t" style="right:1359.40px;top:530.91px;font-size:9.2px;color:#000000;font-weight:bold;font-style:normal;">##########</div>
<div class="t" style="left:568.90px;top:530.91px;font-size:9.2px;color:#000000;font-weight:bold;font-style:normal;">руб.</div>
<div class="t" style="left:309.70px;top:542.91px;font-size:9.2px;color:#000000;font-weight:normal;font-style:normal;">Строительные работы</div>
<div class="t" style="right:1414.70px;top:542.91px;font-size:9.2px;color:#000000;font-weight:normal;font-style:normal;">7 558,38</div>
<div class="t" style="right:1359.40px;top:542.91px;font-size:9.2px;color:#000000;font-weight:normal;font-style:normal;">98 896,13</div>
<div class="t" style="left:568.90px;top:542.91px;font-size:9.2px;color:#000000;font-weight:normal;font-style:normal;">руб.</div>
<div class="t" style="left:309.70px;top:553.91px;font-size:9.2px;color:#000000;font-weight:normal;font-style:normal;">Работы по монтажу оборудования</div>
<div class="t" style="right:1414.70px;top:553.91px;font-size:9.2px;color:#000000;font-weight:normal;font-style:normal;">#######</div>
<div class="t" style="right:1359.40px;top:553.91px;font-size:9.2px;color:#000000;font-weight:normal;font-style:normal;">##########</div>
<div class="t" style="left:568.90px;top:553.91px;font-size:9.2px;color:#000000;font-weight:normal;font-style:normal;">руб.</div>
<div class="t" style="left:309.70px;top:564.91px;font-size:9.2px;color:#000000;font-weight:normal;font-style:normal;">Оборудование</div>
<div class="t" style="right:1414.70px;top:564.91px;font-size:9.2px;color:#000000;font-weight:normal;font-style:normal;">#######</div>
<div class="t" style="right:1359.40px;top:564.91px;font-size:9.2px;color:#000000;font-weight:normal;font-style:normal;">597 538,19</div>
<div class="t" style="left:568.90px;top:564.91px;font-size:9.2px;color:#000000;font-weight:normal;font-style:normal;">руб.</div>
<div class="t" style="left:309.70px;top:575.91px;font-size:9.2px;color:#000000;font-weight:normal;font-style:normal;">Прочие работы и затраты</div>
<div class="t" style="right:1414.70px;top:575.91px;font-size:9.2px;color:#000000;font-weight:normal;font-style:normal;">2 129,79</div>
<div class="t" style="right:1359.40px;top:575.91px;font-size:9.2px;color:#000000;font-weight:normal;font-style:normal;">63 299,03</div>
<div class="t" style="left:568.90px;top:575.91px;font-size:9.2px;color:#000000;font-weight:normal;font-style:normal;">руб.</div>
<div class="t" style="left:309.70px;top:586.91px;font-size:9.2px;color:#000000;font-weight:normal;font-style:normal;">Средства на оплату труда</div>
<div class="t" style="right:1414.70px;top:586.91px;font-size:9.2px;color:#000000;font-weight:normal;font-style:normal;">#######</div>
<div class="t" style="right:1359.40px;top:586.91px;font-size:9.2px;color:#000000;font-weight:normal;font-style:normal;">503 364,60</div>
<div class="t" style="left:568.90px;top:586.91px;font-size:9.2px;color:#000000;font-weight:normal;font-style:normal;">руб.</div>
<div class="t" style="left:309.70px;top:597.91px;font-size:9.2px;color:#000000;font-weight:normal;font-style:normal;">Затраты труда</div>
<div class="t" style="right:1414.70px;top:597.91px;font-size:9.2px;color:#000000;font-weight:normal;font-style:normal;">1 003,96</div>
<div class="t" style="left:566.00px;top:597.91px;font-size:9.2px;color:#000000;font-weight:normal;font-style:normal;">чел.-ч.</div>
<div class="t" style="left:16.80px;top:619.84px;font-size:9.41px;color:#000000;font-weight:normal;font-style:normal;">Составлен(а) по ТСН-2001 с учетом Дополнения №: 72</div>
<div class="t" style="left:16.80px;top:630.92px;font-size:9.17px;color:#000000;font-weight:normal;font-style:normal;">№ и период сборника коэффициентов (индексов) пересчета: Индексы ТСН-2001 МГЭ ремонт №212 июль 2024 года</div>
<div class="t tc" style="left:26.00px;top:671.01px;font-size:9.2px;color:#000000;font-weight:normal;font-style:normal;">№</div>
<div class="t tc" style="left:26.00px;top:681.61px;font-size:9.2px;color:#000000;font-weight:normal;font-style:normal;">п/п</div>
<div class="t tc" style="left:62.50px;top:659.71px;font-size:9.2px;color:#000000;font-weight:normal;font-style:normal;">Шифр</div>
<div class="t tc" style="left:62.50px;top:670.41px;font-size:9.2px;color:#000000;font-weight:normal;font-style:normal;">расценки</div>
<div class="t tc" style="left:62.50px;top:681.31px;font-size:9.2px;color:#000000;font-weight:normal;font-style:normal;">и коды</div>
<div class="t tc" style="left:62.50px;top:692.01px;font-size:9.2px;color:#000000;font-weight:normal;font-style:normal;">ресурсов</div>
<div class="t tc" style="left:172.50px;top:675.11px;font-size:9.2px;color:#000000;font-weight:normal;font-style:normal;">Наименование работ и затрат</div>
<div class="t tc" style="left:282.50px;top:675.11px;font-size:9.2px;color:#000000;font-weight:normal;font-style:normal;">Ед. изм.</div>
<div class="t tc" style="left:326.00px;top:670.81px;font-size:9.2px;color:#000000;font-weight:normal;font-style:normal;">Кол-во</div>
<div class="t tc" style="left:326.00px;top:681.61px;font-size:9.2px;color:#000000;font-weight:normal;font-style:normal;">единиц</div>
<div class="t tc" style="left:366.50px;top:664.11px;font-size:9.2px;color:#000000;font-weight:normal;font-style:normal;">Цена на</div>
<div class="t tc" style="left:366.50px;top:675.61px;font-size:9.2px;color:#000000;font-weight:normal;font-style:normal;">ед. изм.,</div>
<div class="t tc" style="left:366.50px;top:686.61px;font-size:9.2px;color:#000000;font-weight:normal;font-style:normal;">руб.</div>
<div class="t tc" style="left:406.00px;top:653.31px;font-size:9.2px;color:#000000;font-weight:normal;font-style:normal;">Попра-</div>
<div class="t tc" style="left:406.00px;top:664.21px;font-size:9.2px;color:#000000;font-weight:normal;font-style:normal;">вочны</div>
<div class="t tc" style="left:406.00px;top:675.11px;font-size:9.2px;color:#000000;font-weight:normal;font-style:normal;">е</div>
<div class="t tc" style="left:406.00px;top:686.11px;font-size:9.2px;color:#000000;font-weight:normal;font-style:normal;">коэффи-</div>
<div class="t tc" style="left:406.00px;top:697.21px;font-size:9.2px;color:#000000;font-weight:normal;font-style:normal;">циенты</div>
<div class="t tc" style="left:444.50px;top:648.31px;font-size:9.2px;color:#000000;font-weight:normal;font-style:normal;">Коэффи-</div>
<div class="t tc" style="left:444.50px;top:659.21px;font-size:9.2px;color:#000000;font-weight:normal;font-style:normal;">циенты</div>
<div class="t tc" style="left:444.50px;top:670.21px;font-size:9.2px;color:#000000;font-weight:normal;font-style:normal;">зимних</div>
<div class="t tc" style="left:444.50px;top:681.21px;font-size:9.2px;color:#000000;font-weight:normal;font-style:normal;">удорож</div>
<div class="t tc" style="left:444.50px;top:692.21px;font-size:9.2px;color:#000000;font-weight:normal;font-style:normal;">а-</div>
<div class="t tc" style="left:444.50px;top:703.21px;font-size:9.2px;color:#000000;font-weight:normal;font-style:normal;">ний</div>
<div class="t tc" style="left:486.50px;top:648.31px;font-size:9.2px;color:#000000;font-weight:normal;font-style:normal;">Всего в</div>
<div class="t tc" style="left:486.50px;top:659.21px;font-size:9.2px;color:#000000;font-weight:normal;font-style:normal;">ценах на</div>
<div class="t tc" style="left:486.50px;top:670.21px;font-size:9.2px;color:#000000;font-weight:normal;font-style:normal;">январь</div>
<div class="t tc" style="left:486.50px;top:681.21px;font-size:9.2px;color:#000000;font-weight:normal;font-style:normal;">2000</div>
<div class="t tc" style="left:486.50px;top:692.21px;font-size:9.2px;color:#000000;font-weight:normal;font-style:normal;">года,</div>
<div class="t tc" style="left:486.50px;top:703.21px;font-size:9.2px;color:#000000;font-weight:normal;font-style:normal;">руб.</div>
<div class="t tc" style="left:535.50px;top:642.41px;font-size:9.2px;color:#000000;font-weight:normal;font-style:normal;">Коэффи-</div>
<div class="t tc" style="left:535.50px;top:653.31px;font-size:9.2px;color:#000000;font-weight:normal;font-style:normal;">циенты</div>
<div class="t tc" style="left:535.50px;top:664.21px;font-size:9.2px;color:#000000;font-weight:normal;font-style:normal;">(индек-</div>
<div class="t tc" style="left:535.50px;top:675.21px;font-size:9.2px;color:#000000;font-weight:normal;font-style:normal;">сы) пере-</div>
<div class="t tc" style="left:535.50px;top:686.21px;font-size:9.2px;color:#000000;font-weight:normal;font-style:normal;">счета,</div>
<div class="t tc" style="left:535.50px;top:697.21px;font-size:9.2px;color:#000000;font-weight:normal;font-style:normal;">нормы</div>
<div class="t tc" style="left:535.50px;top:708.21px;font-size:9.2px;color:#000000;font-weight:normal;font-style:normal;">НР и СП</div>
<div class="t tc" style="left:586.50px;top:648.31px;font-size:9.2px;color:#000000;font-weight:normal;font-style:normal;">ВСЕГО</div>
<div class="t tc" style="left:586.50px;top:659.21px;font-size:9.2px;color:#000000;font-weight:normal;font-style:normal;">затрат в</div>
<div class="t tc" style="left:586.50px;top:670.21px;font-size:9.2px;color:#000000;font-weight:normal;font-style:normal;">текущем</div>
<div class="t tc" style="left:586.50px;top:681.21px;font-size:9.2px;color:#000000;font-weight:normal;font-style:normal;">уровне</div>
<div class="t tc" style="left:586.50px;top:692.21px;font-size:9.2px;color:#000000;font-weight:normal;font-style:normal;">цен,</div>
<div class="t tc" style="left:586.50px;top:703.21px;font-size:9.2px;color:#000000;font-weight:normal;font-style:normal;">руб.</div>
<div class="t tc" style="left:26.50px;top:722.41px;font-size:9.2px;color:#000000;font-weight:normal;font-style:normal;">1</div>
<div class="t tc" style="left:63.00px;top:722.41px;font-size:9.2px;color:#000000;font-weight:normal;font-style:normal;">2</div>
<div class="t tc" style="left:173.00px;top:722.41px;font-size:9.2px;color:#000000;font-weight:normal;font-style:normal;">3</div>
<div class="t tc" style="left:283.00px;top:722.41px;font-size:9.2px;color:#000000;font-weight:normal;font-style:normal;">4</div>
<div class="t tc" style="left:326.50px;top:722.41px;font-size:9.2px;color:#000000;font-weight:normal;font-style:normal;">5</div>
<div class="t tc" style="left:367.00px;top:722.41px;font-size:9.2px;color:#000000;font-weight:normal;font-style:normal;">6</div>
<div class="t tc" style="left:406.50px;top:722.41px;font-size:9.2px;color:#000000;font-weight:normal;font-style:normal;">7</div>
<div class="t tc" style="left:445.00px;top:722.41px;font-size:9.2px;color:#000000;font-weight:normal;font-style:normal;">8</div>
<div class="t tc" style="left:487.00px;top:722.41px;font-size:9.2px;color:#000000;font-weight:normal;font-style:normal;">9</div>
<div class="t tc" style="left:536.00px;top:722.41px;font-size:9.2px;color:#000000;font-weight:normal;font-style:normal;">10</div>
<div class="t tc" style="left:587.00px;top:722.41px;font-size:9.2px;color:#000000;font-weight:normal;font-style:normal;">11</div>
<div class="t tc" style="left:312.50px;top:743.93px;font-size:10.0px;color:#000000;font-weight:bold;font-style:normal;">Раздел: 1. СПС</div>
<div class="t" style="left:17.80px;top:756.01px;font-size:9.2px;color:#000000;font-weight:normal;font-style:normal;">1</div>
<div class="t" style="left:41.20px;top:755.96px;font-size:9.36px;color:#000000;font-weight:normal;font-style:normal;">4.10-71-11</div>
<div class="t" style="left:90.10px;top:755.92px;font-size:9.46px;color:#000000;font-weight:normal;font-style:normal;">Монтаж пульта служебной связи и</div>
<div class="t" style="left:90.10px;top:766.52px;font-size:9.46px;color:#000000;font-weight:normal;font-style:normal;">контроля</div>
<div class="t" style="right:1615.50px;top:767.01px;font-size:9.2px;color:#000000;font-weight:normal;font-style:italic;">1 ПУЛЬТ</div>
<div class="t" style="right:1577.50px;top:767.01px;font-size:9.2px;color:#000000;font-weight:normal;font-style:normal;">1</div>
<div class="t" style="left:90.10px;top:778.51px;font-size:9.2px;color:#000000;font-weight:normal;font-style:normal;">ЗП</div>
<div class="t" style="right:1534.20px;top:778.51px;font-size:9.2px;color:#000000;font-weight:normal;font-style:normal;">858,16</div>
<div class="t" style="right:1457.50px;top:778.51px;font-size:9.2px;color:#000000;font-weight:normal;font-style:normal;">1</div>
<div class="t" style="right:1414.20px;top:778.51px;font-size:9.2px;color:#000000;font-weight:normal;font-style:normal;">858,16</div>
<div class="t" style="right:1359.70px;top:778.51px;font-size:9.2px;color:#000000;font-weight:normal;font-style:normal;">34,51</div>
<div class="t" style="right:1312.50px;top:778.51px;font-size:9.2px;color:#000000;font-weight:normal;font-style:normal;">29 615,10</div>
<div class="t" style="left:90.10px;top:789.51px;font-size:9.2px;color:#000000;font-weight:normal;font-style:normal;">ЭМ</div>
<div class="t" style="right:1534.20px;top:789.51px;font-size:9.2px;color:#000000;font-weight:normal;font-style:normal;">390,42</div>
<div class="t" style="right:1457.50px;top:789.51px;font-size:9.2px;color:#000000;font-weight:normal;font-style:normal;">1</div>
<div class="t" style="right:1414.20px;top:789.51px;font-size:9.2px;color:#000000;font-weight:normal;font-style:normal;">390,42</div>
<div class="t" style="right:1359.70px;top:789.51px;font-size:9.2px;color:#000000;font-weight:normal;font-style:normal;">12,62</div>
<div class="t" style="right:1312.50px;top:789.51px;font-size:9.2px;color:#000000;font-weight:normal;font-style:normal;">4 927,10</div>
<div class="t" style="left:90.10px;top:800.51px;font-size:9.2px;color:#000000;font-weight:normal;font-style:normal;">в т.ч. ЗПМ</div>
<div class="t" style="right:1534.20px;top:800.51px;font-size:9.2px;color:#000000;font-weight:normal;font-style:normal;">42,91</div>
<div class="t" style="right:1457.50px;top:800.51px;font-size:9.2px;color:#000000;font-weight:normal;font-style:normal;">1</div>
<div class="t" style="right:1414.20px;top:800.51px;font-size:9.2px;color:#000000;font-weight:normal;font-style:italic;">42,91</div>
<div class="t" style="right:1359.70px;top:800.51px;font-size:9.2px;color:#000000;font-weight:normal;font-style:normal;">34,51</div>
<div class="t" style="right:1312.50px;top:800.51px;font-size:9.2px;color:#000000;font-weight:normal;font-style:italic;">1 480,82</div>
<div class="t" style="left:90.10px;top:811.51px;font-size:9.2px;color:#000000;font-weight:normal;font-style:normal;">МР</div>
<div class="t" style="right:1534.20px;top:811.51px;font-size:9.2px;color:#000000;font-weight:normal;font-style:normal;">14,44</div>
<div class="t" style="right:1457.50px;top:811.51px;font-size:9.2px;color:#000000;font-weight:normal;font-style:normal;">1</div>
<div class="t" style="right:1414.20px;top:811.51px;font-size:9.2px;color:#000000;font-weight:normal;font-style:normal;">14,44</div>
<div class="t" style="right:1359.70px;top:811.51px;font-size:9.2px;color:#000000;font-weight:normal;font-style:normal;">18,68</div>
<div class="t" style="right:1312.50px;top:811.51px;font-size:9.2px;color:#000000;font-weight:normal;font-style:normal;">269,74</div>
<div class="t" style="left:90.10px;top:822.51px;font-size:9.2px;color:#000000;font-weight:normal;font-style:normal;">НР от ЗП</div>
<div class="t" style="right:1615.50px;top:822.51px;font-size:9.2px;color:#000000;font-weight:normal;font-style:normal;">%</div>
<div class="t" style="right:1577.50px;top:822.51px;font-size:9.2px;color:#000000;font-weight:normal;font-style:normal;">114</div>
<div class="t" style="right:1414.20px;top:822.51px;font-size:9.2px;color:#000000;font-weight:normal;font-style:normal;">978,30</div>
<div class="t" style="right:1359.70px;top:822.51px;font-size:9.2px;color:#000000;font-weight:normal;font-style:normal;">79</div>
<div class="t" style="right:1312.50px;top:822.51px;font-size:9.2px;color:#000000;font-weight:normal;font-style:normal;">23 395,93</div>
<div class="t" style="left:90.10px;top:833.51px;font-size:9.2px;color:#000000;font-weight:normal;font-style:normal;">СП от ЗП</div>
<div class="t" style="right:1615.50px;top:833.51px;font-size:9.2px;color:#000000;font-weight:normal;font-style:normal;">%</div>
<div class="t" style="right:1577.50px;top:833.51px;font-size:9.2px;color:#000000;font-weight:normal;font-style:normal;">67</div>
<div class="t" style="right:1414.20px;top:833.51px;font-size:9.2px;color:#000000;font-weight:normal;font-style:normal;">574,97</div>
<div class="t" style="right:1359.70px;top:833.51px;font-size:9.2px;color:#000000;font-weight:normal;font-style:normal;">41</div>
<div class="t" style="right:1312.50px;top:833.51px;font-size:9.2px;color:#000000;font-weight:normal;font-style:normal;">12 142,19</div>
<div class="t" style="left:90.10px;top:844.51px;font-size:9.2px;color:#000000;font-weight:normal;font-style:normal;">НР и СП от ЗПМ</div>
<div class="t" style="right:1615.50px;top:844.51px;font-size:9.2px;color:#000000;font-weight:normal;font-style:normal;">%</div>
<div class="t" style="right:1577.50px;top:844.51px;font-size:9.2px;color:#000000;font-weight:normal;font-style:normal;">175</div>
<div class="t" style="right:1414.20px;top:844.51px;font-size:9.2px;color:#000000;font-weight:normal;font-style:normal;">75,09</div>
<div class="t" style="right:1359.70px;top:844.51px;font-size:9.2px;color:#000000;font-weight:normal;font-style:normal;">160</div>
<div class="t" style="right:1312.50px;top:844.51px;font-size:9.2px;color:#000000;font-weight:normal;font-style:normal;">2 369,31</div>
<div class="t" style="left:90.10px;top:855.51px;font-size:9.2px;color:#000000;font-weight:normal;font-style:normal;">ЗТР</div>
<div class="t" style="right:1615.50px;top:855.51px;font-size:9.2px;color:#000000;font-weight:normal;font-style:normal;">чел-ч</div>
<div class="t" style="right:1577.50px;top:855.51px;font-size:9.2px;color:#000000;font-weight:normal;font-style:normal;">68</div>
<div class="t" style="right:1457.50px;top:855.51px;font-size:9.2px;color:#000000;font-weight:normal;font-style:normal;">1</div>
<div class="t" style="right:1414.20px;top:855.51px;font-size:9.2px;color:#000000;font-weight:normal;font-style:normal;">68,00</div>
<div class="t" style="left:90.10px;top:866.84px;font-size:9.42px;color:#000000;font-weight:bold;font-style:normal;">ВСЕГО работ по позиции:</div>
<div class="t" style="right:1414.20px;top:866.92px;font-size:9.17px;color:#000000;font-weight:bold;font-style:normal;">2 891,38</div>
<div class="t" style="right:1312.50px;top:866.95px;font-size:9.1px;color:#000000;font-weight:bold;font-style:normal;">72 719,37</div>
<div class="t" style="left:90.10px;top:878.84px;font-size:9.42px;color:#000000;font-weight:bold;font-style:normal;">ВСЕГО оборудование по позиции:</div>
<div class="t" style="right:1414.20px;top:878.92px;font-size:9.17px;color:#000000;font-weight:bold;font-style:normal;">0,00</div>
<div class="t" style="right:1312.50px;top:878.95px;font-size:9.1px;color:#000000;font-weight:bold;font-style:normal;">0,00</div>
<div class="t" style="left:90.10px;top:890.84px;font-size:9.42px;color:#000000;font-weight:bold;font-style:normal;">ВСЕГО по позиции:</div>
<div class="t" style="right:1414.20px;top:890.92px;font-size:9.17px;color:#000000;font-weight:bold;font-style:normal;">2 891,38</div>
<div class="t" style="right:1312.50px;top:890.95px;font-size:9.1px;color:#000000;font-weight:bold;font-style:normal;">72 719,37</div>
<div class="t" style="left:17.80px;top:913.01px;font-size:9.2px;color:#7f3a8f;font-weight:normal;font-style:normal;">2</div>
<div class="t" style="left:41.20px;top:913.01px;font-size:9.2px;color:#7f3a8f;font-weight:normal;font-style:normal;">УПД</div>
<div class="t" style="left:90.10px;top:913.01px;font-size:9.2px;color:#7f3a8f;font-weight:normal;font-style:normal;">ОБОРУДОВАНИЕ:</div>
<div class="t" style="left:90.10px;top:923.66px;font-size:9.06px;color:#7f3a8f;font-weight:normal;font-style:normal;">Центральный прибор индикации и</div>
<div class="t" style="left:90.10px;top:934.66px;font-size:9.06px;color:#7f3a8f;font-weight:normal;font-style:normal;">управления ЦПИУ «Рубеж», ЦПИУ</div>
<div class="t" style="left:90.10px;top:945.76px;font-size:9.06px;color:#7f3a8f;font-weight:normal;font-style:normal;">&quot;Рубеж&quot; исп.1</div>
<div class="t" style="left:90.10px;top:956.66px;font-size:7.33px;color:#7f3a8f;font-weight:normal;font-style:italic;">68 667,78 = [562 064,4 / 1,2 /  7,11] +  1,2%</div>
<div class="t" style="left:90.10px;top:967.26px;font-size:7.33px;color:#7f3a8f;font-weight:normal;font-style:italic;">Трансп +  3% Заг.скл</div>
<div class="t" style="right:1615.50px;top:967.91px;font-size:9.2px;color:#7f3a8f;font-weight:normal;font-style:italic;">шт.</div>
<div class="t" style="right:1577.50px;top:967.91px;font-size:9.2px;color:#7f3a8f;font-weight:normal;font-style:normal;">1</div>
<div class="t" style="right:1534.50px;top:967.91px;font-size:9.2px;color:#7f3a8f;font-weight:normal;font-style:normal;">#######</div>
<div class="t" style="right:1457.50px;top:967.91px;font-size:9.2px;color:#7f3a8f;font-weight:normal;font-style:normal;">1</div>
<div class="t" style="right:1414.50px;top:967.91px;font-size:9.2px;color:#7f3a8f;font-weight:normal;font-style:normal;">#######</div>
<div class="t" style="right:1359.70px;top:967.91px;font-size:9.2px;color:#7f3a8f;font-weight:normal;font-style:normal;">7,11</div>
<div class="t" style="right:1312.50px;top:967.91px;font-size:9.2px;color:#7f3a8f;font-weight:normal;font-style:normal;">#########</div>
<div class="t" style="left:90.10px;top:978.84px;font-size:9.42px;color:#7f3a8f;font-weight:bold;font-style:normal;">ВСЕГО по позиции:</div>
<div class="t" style="right:1414.20px;top:978.95px;font-size:9.1px;color:#7f3a8f;font-weight:bold;font-style:normal;">68 667,78</div>
<div class="t" style="right:1312.50px;top:978.96px;font-size:9.07px;color:#7f3a8f;font-weight:bold;font-style:normal;">488 227,92</div>
<div class="r" style="left:13px;top:252px;width:27px;height:13px;box-sizing:border-box;border:2px solid #217346;"></div>
<div class="r" style="left:35px;top:260px;width:7px;height:7px;background:#ffffff;"></div>
<div class="r" style="left:36px;top:261px;width:5px;height:5px;background:#217346;"></div>
<div class="t" style="left:215.70px;top:716.94px;font-size:35.97px;color:rgba(128,128,128,0.85);font-weight:normal;font-style:normal;">Страница 1</div>
<div class="r" style="left:1899px;top:243px;width:21px;height:747px;background:#e6e6e6;"></div>
<div class="r" style="left:1898px;top:253px;width:1px;height:737px;background:#989898;"></div>
<div class="r" style="left:1902px;top:245px;width:15px;height:745px;background:#dadada;"></div>
<div class="r" style="left:1902px;top:245px;width:15px;height:15px;background:#ffffff;box-sizing:border-box;border:1px solid #b4b4b4;"></div>
<svg class="r" style="left:1905px;top:250px;" width="9" height="5" viewBox="0 0 9 5"><path d="M0 5h9L4.5 0z" fill="#606060"/></svg>
<div class="r" style="left:1902px;top:260px;width:15px;height:113px;background:#ffffff;box-sizing:border-box;border:1px solid #a8a8a8;"></div>
<div class="r" style="left:1902px;top:976px;width:15px;height:15px;background:#ffffff;box-sizing:border-box;border:1px solid #b4b4b4;"></div>
<svg class="r" style="left:1905px;top:981px;" width="9" height="5" viewBox="0 0 9 5"><path d="M0 0h9L4.5 5z" fill="#606060"/></svg>
<div class="r" style="left:0px;top:990px;width:1920px;height:28px;background:#e6e6e6;"></div>
<div class="r" style="left:0px;top:990px;width:1920px;height:1px;background:#a8a8a8;"></div>
<div class="r" style="left:0px;top:1018px;width:1920px;height:1px;background:#d4d4d4;"></div>
<svg class="r" style="left:26px;top:998px;" width="5" height="9" viewBox="0 0 5 9"><path d="M5 0v9L0 4.5z" fill="#c0c0c0"/></svg>
<svg class="r" style="left:55px;top:997px;" width="6" height="10" viewBox="0 0 6 10"><path d="M0 0v10l6-5z" fill="#217346"/></svg>
<div class="r" style="left:100px;top:990px;width:66px;height:27px;background:#ffffff;"></div>
<div class="r" style="left:100px;top:990px;width:1px;height:27px;background:#c6c6c6;"></div>
<div class="r" style="left:165px;top:990px;width:1px;height:27px;background:#c6c6c6;"></div>
<div class="r" style="left:100px;top:1013px;width:66px;height:2px;background:#217346;"></div>
<div class="t" style="left:112.50px;top:1003.81px;font-size:12.37px;color:#217346;font-weight:bold;font-style:normal;">1. СПС</div>
<div class="r" style="left:238px;top:995px;width:1px;height:18px;background:#b4b4b4;"></div>
<div class="r" style="left:304px;top:995px;width:1px;height:18px;background:#b4b4b4;"></div>
<div class="r" style="left:513px;top:995px;width:1px;height:18px;background:#b4b4b4;"></div>
<div class="r" style="left:678px;top:995px;width:1px;height:18px;background:#b4b4b4;"></div>
<div class="r" style="left:876px;top:995px;width:1px;height:18px;background:#b4b4b4;"></div>
<div class="r" style="left:941px;top:995px;width:1px;height:18px;background:#b4b4b4;"></div>
<div class="r" style="left:1043px;top:995px;width:1px;height:18px;background:#b4b4b4;"></div>
<div class="t" style="left:178.30px;top:1003.77px;font-size:12.5px;color:#444444;font-weight:normal;font-style:normal;">2. СОУЭ</div>
<div class="t" style="left:252.50px;top:1003.77px;font-size:12.5px;color:#444444;font-weight:normal;font-style:normal;">3. АПТ</div>
<div class="t" style="left:323.00px;top:1003.77px;font-size:12.5px;color:#444444;font-weight:normal;font-style:normal;">4. Пусконаладочные работы</div>
<div class="t" style="left:529.20px;top:1003.71px;font-size:12.66px;color:#444444;font-weight:normal;font-style:normal;">Дефектная ведомость</div>
<div class="t" style="left:695.40px;top:1003.77px;font-size:12.5px;color:#444444;font-weight:normal;font-style:normal;">Расчет стоимости ресурсов</div>
<div class="t" style="left:888.30px;top:1003.77px;font-size:12.5px;color:#444444;font-weight:normal;font-style:normal;">Source</div>
<div class="t" style="left:954.40px;top:1003.77px;font-size:12.49px;color:#444444;font-weight:normal;font-style:normal;">SourceObSm</div>
<div class="t" style="left:1056.00px;top:1003.77px;font-size:12.5px;color:#444444;font-weight:normal;font-style:normal;">SmtF</div>
<div class="t" style="left:1091.00px;top:1003.94px;font-size:12px;color:#217346;font-weight:bold;font-style:normal;">...</div>
<svg class="r" style="left:1115px;top:996px;" width="18" height="18" viewBox="0 0 18 18"><circle cx="9" cy="9" r="7.8" fill="none" stroke="#6a6a6a" stroke-width="1.3"/><path d="M9 4.5v9M4.5 9h9" stroke="#6a6a6a" stroke-width="1.5"/></svg>
<div class="r" style="left:1152px;top:1000px;width:2px;height:2px;background:#a0a0a0;"></div>
<div class="r" style="left:1152px;top:1004px;width:2px;height:2px;background:#a0a0a0;"></div>
<div class="r" style="left:1152px;top:1008px;width:2px;height:2px;background:#a0a0a0;"></div>
<div class="r" style="left:1169px;top:997px;width:732px;height:15px;background:#dadada;"></div>
<div class="r" style="left:1169px;top:997px;width:16px;height:15px;background:#ffffff;box-sizing:border-box;border:1px solid #a8a8a8;"></div>
<svg class="r" style="left:1174px;top:1001px;" width="5" height="8" viewBox="0 0 5 8"><path d="M5 0v8L0 4z" fill="#606060"/></svg>
<div class="r" style="left:1184px;top:997px;width:690px;height:15px;background:#ffffff;box-sizing:border-box;border:1px solid #a8a8a8;"></div>
<div class="r" style="left:1886px;top:997px;width:15px;height:15px;background:#ffffff;box-sizing:border-box;border:1px solid #b4b4b4;"></div>
<svg class="r" style="left:1892px;top:1001px;" width="5" height="8" viewBox="0 0 5 8"><path d="M0 0v8l5-4z" fill="#606060"/></svg>
<div class="r" style="left:0px;top:1019px;width:1920px;height:21px;background:#f3f3f3;"></div>
<div class="t" style="left:7.00px;top:1029.24px;font-size:12.0px;color:#444444;font-weight:normal;font-style:normal;">Готово</div>
<svg class="r" style="left:63px;top:1021px;" width="14" height="14" viewBox="0 0 14 14"><circle cx="3" cy="3" r="2.6" fill="#6a6a6a"/><rect x="6" y="1" width="7" height="2.5" fill="#6a6a6a"/><path d="M1.5 6.5h11v7h-11zM1.5 9h11M1.5 11.5h11M5 6.5v7M8.5 6.5v7" fill="none" stroke="#6a6a6a" stroke-width="1"/></svg>
<svg class="r" style="left:1643px;top:1021px;" width="14" height="14" viewBox="0 0 14 14"><path d="M0.5 0.5h13v13h-13zM0.5 4.8h13M0.5 9.2h13M4.8 0.5v13M9.2 0.5v13" fill="none" stroke="#6a6a6a" stroke-width="1.1"/></svg>
<svg class="r" style="left:1681px;top:1021px;" width="15" height="14" viewBox="0 0 15 14"><path d="M0.5 0.5h13v13h-13z" fill="none" stroke="#6a6a6a" stroke-width="1.1"/><path d="M3 3h8v8H3z" fill="none" stroke="#6a6a6a"/><path d="M4.5 5.5h5M4.5 7.5h5M4.5 9.5h5" stroke="#6a6a6a"/></svg>
<div class="r" style="left:1707px;top:1019px;width:38px;height:21px;background:#c6c6c6;"></div>
<svg class="r" style="left:1719px;top:1021px;" width="15" height="14" viewBox="0 0 15 14"><path d="M0.5 0.5h13v13h-13zM0.5 9h8V0.5M4.5 0.5V9" fill="none" stroke="#6a6a6a" stroke-width="1.1"/></svg>
<div class="r" style="left:1750px;top:1028px;width:6px;height:2px;background:#606060;"></div>
<div class="r" style="left:1760px;top:1028px;width:100px;height:1px;background:#b4b4b4;"></div>
<div class="r" style="left:1810px;top:1025px;width:1px;height:6px;background:#b4b4b4;"></div>
<div class="r" style="left:1787px;top:1022px;width:5px;height:11px;background:#6a6a6a;"></div>
<div class="r" style="left:1863px;top:1028px;width:8px;height:2px;background:#606060;"></div>
<div class="r" style="left:1866px;top:1025px;width:2px;height:8px;background:#606060;"></div>
<div class="t" style="left:1882.00px;top:1029.25px;font-size:11.4px;color:#444444;font-weight:normal;font-style:normal;">60 %</div>
<div class="r" style="left:0px;top:1040px;width:1920px;height:8px;background:#22221f;"></div>
<div class="r" style="left:196px;top:1040px;width:48px;height:8px;background:#4b4b46;"></div>
<div class="r" style="left:1915px;top:1040px;width:1px;height:8px;background:#8a8a8a;"></div>
<div class="t" style="left:1820.00px;top:1050.44px;font-size:12px;color:#ffffff;font-weight:normal;font-style:normal;">13:40</div></body></html>
